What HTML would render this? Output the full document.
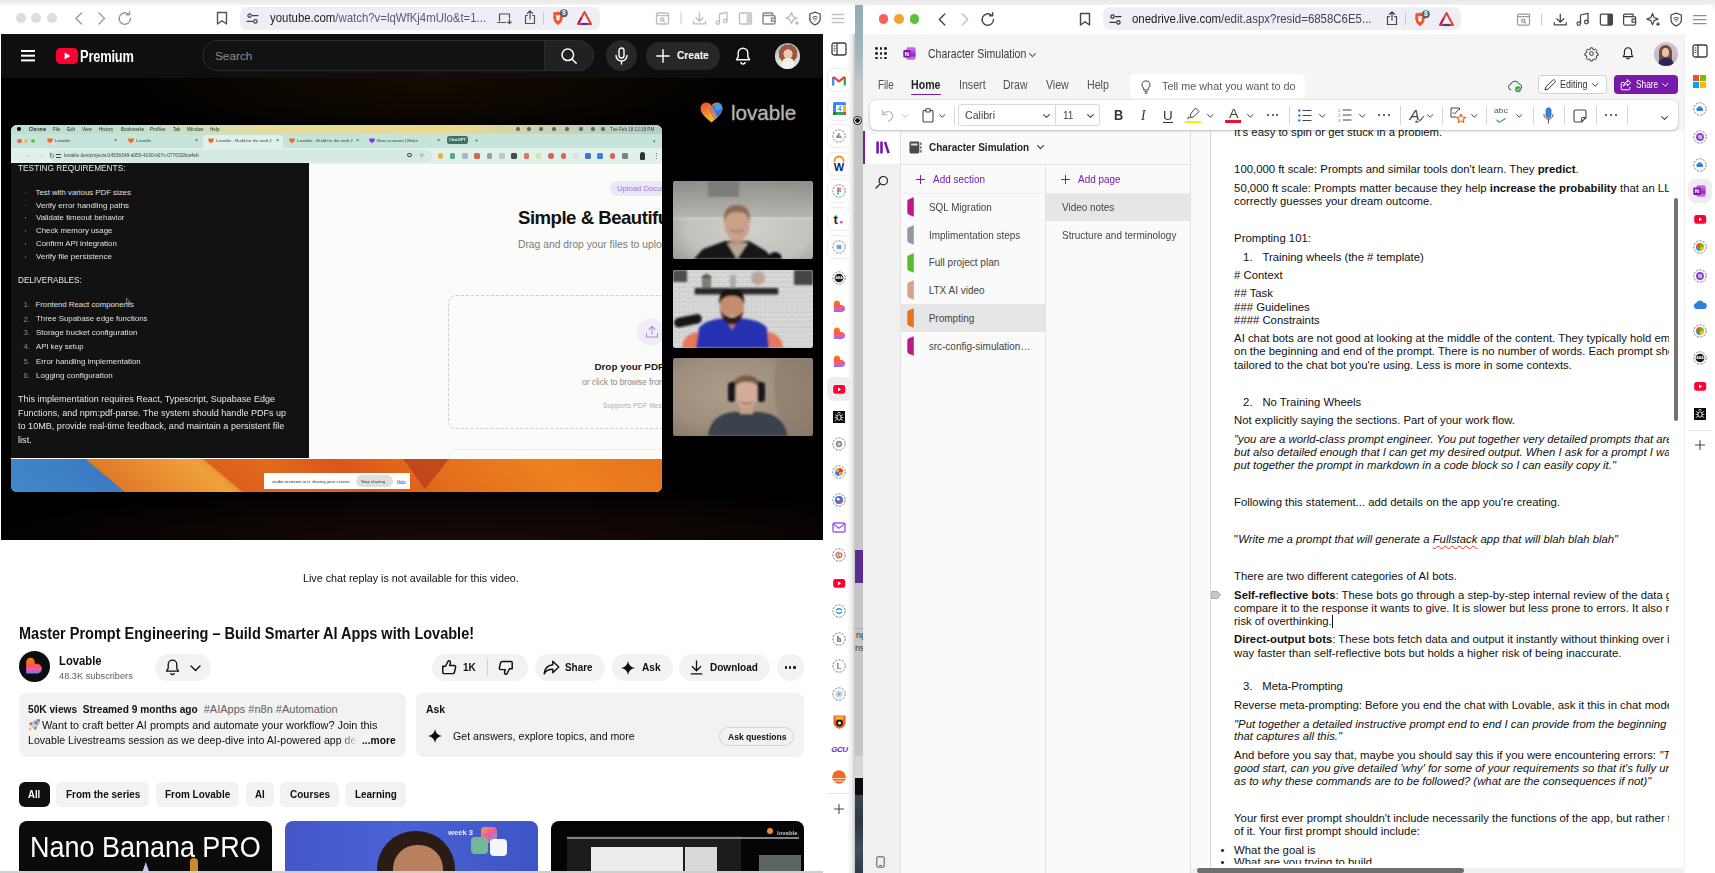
<!DOCTYPE html>
<html lang="en">
<head>
<meta charset="utf-8">
<title>Screenshot</title>
<style>
*{box-sizing:border-box;margin:0;padding:0}
html,body{width:1715px;height:873px;overflow:hidden;background:#c9c9c9;font-family:"Liberation Sans",sans-serif;color:#0f0f0f}
.abs{position:absolute}
#root{position:relative;width:1715px;height:873px;overflow:hidden}
.t{position:absolute;white-space:nowrap;line-height:1}
svg{position:absolute;overflow:visible}
/* ---------- left window ---------- */
#lw{position:absolute;left:0;top:0;width:855px;height:873px;background:#fff;overflow:hidden}
#lw .topstrip{position:absolute;left:0;top:0;width:855px;height:5px;background:linear-gradient(#e9e9e9,#f3f3f3)}
#lbar{position:absolute;left:0;top:5px;width:855px;height:29px;background:#fff}
.tl{position:absolute;width:10px;height:10px;border-radius:50%;top:13px}
.urlbar{position:absolute;top:7px;height:23px;border-radius:7px;background:#eeeef6}
#ythead{position:absolute;left:1px;top:34px;width:822px;height:44px;background:#0f0f0f}
#video{position:absolute;left:1px;top:78px;width:822px;height:462px;background:#000;overflow:hidden}
#lside{position:absolute;left:823px;top:34px;width:32px;height:839px;background:linear-gradient(90deg,#fff 0,#fff 24px,#ededed 29px,#c4c4c4 32px)}
#ytbody{position:absolute;left:1px;top:540px;width:822px;height:333px;background:#fff;overflow:hidden}
.pill{position:absolute;background:#f2f2f2;border-radius:14px;height:28px}
.chip{position:absolute;top:242px;height:25px;border-radius:6px;background:#f2f2f2;font-size:11px;font-weight:bold;line-height:25px;text-align:center;color:#0f0f0f;white-space:nowrap}

/* video */
#ss{position:absolute;left:10.500px;top:125px;width:651.500px;height:367px;border-radius:6px;overflow:hidden;background:#fbfcfa}
#ss .t{color:#e4e4e4}
.vt{position:absolute;white-space:nowrap;line-height:1;font-size:7.600px;color:#e0e0e0}
.cam{position:absolute;left:673px;width:139.500px;border-radius:3px;overflow:hidden}
/* ---------- gap ---------- */
#gap{position:absolute;left:855px;top:0;width:8px;height:873px;background:#c6c6c6}
/* ---------- right window ---------- */
#rw{position:absolute;left:863px;top:0;width:852px;height:873px;background:#f5f5f5;overflow:hidden}
</style>
</head>
<body>
<div id="root">

<!-- ================= LEFT WINDOW (YouTube) ================= -->
<div id="lw">
  <div class="topstrip"></div>
  <div id="lbar"></div>
  <!-- traffic lights (inactive) -->
  <div class="tl" style="left:16px;background:#dddddd"></div>
  <div class="tl" style="left:31px;background:#dddddd"></div>
  <div class="tl" style="left:47px;background:#dddddd"></div>
  <svg style="left:72px;top:11px" width="64" height="15" viewBox="0 0 64 15" fill="none" stroke="#9a9a9a" stroke-width="1.4" stroke-linecap="round" stroke-linejoin="round">
    <path d="M9.5 2 L4 7.5 L9.5 13"/>
    <path d="M27 2 L32.5 7.5 L27 13"/>
    <path d="M58.5 7.5 a5.7 5.7 0 1 1 -2 -4.3 M57.5 0.8 v3 h-3"/>
  </svg>
  <svg style="left:216px;top:11px" width="12" height="15" viewBox="0 0 12 15" fill="none" stroke="#555" stroke-width="1.4" stroke-linejoin="round"><path d="M1.5 1.5 h9 v11.5 l-4.5 -3.2 l-4.5 3.2 z"/></svg>
  <div class="urlbar" style="left:240px;width:360px"></div>
  <svg style="left:246px;top:12px" width="13" height="13" viewBox="0 0 13 13" fill="none" stroke="#444" stroke-width="1.2" stroke-linecap="round"><circle cx="3.6" cy="3.6" r="1.7"/><path d="M6.6 3.6 H12"/><circle cx="9.4" cy="9.4" r="1.7"/><path d="M1 9.4 H6.4"/></svg>
  <div class="t" style="left:269.500px;top:11.800px;font-size:12.400px;color:#5c5c66;transform:scaleX(.92);transform-origin:0 50%"><span style="color:#1d1d22">youtube.com</span>/watch?v=lqWfKj4mUlo&amp;t=1...</div>
  <svg style="left:497px;top:12px" width="15" height="13" viewBox="0 0 15 13" fill="none" stroke="#555" stroke-width="1.2" stroke-linecap="round" stroke-linejoin="round"><path d="M2.5 9 V2 h10 v4"/><path d="M0.8 10.5 h8"/><path d="M12.5 7.5 v4 M10.8 10 l1.7 1.7 l1.7 -1.7"/></svg>
  <svg style="left:524px;top:10px" width="12" height="15" viewBox="0 0 12 15" fill="none" stroke="#555" stroke-width="1.2" stroke-linecap="round" stroke-linejoin="round"><path d="M6 1 V9 M3.3 3.4 L6 0.8 L8.7 3.4"/><path d="M3.5 5.5 H1.5 V13.5 H10.5 V5.5 H8.5"/></svg>
  <div class="abs" style="left:543px;top:12px;width:1px;height:13px;background:#c9c9d2"></div>
  <svg style="left:550px;top:9px" width="20" height="18" viewBox="0 0 20 18"><path d="M3 4.5 L4.5 2.8 L6 3.4 L8 2.2 L10 3.4 L11.5 2.8 L13 4.5 L12.4 6 L13 8.2 L11.5 13 L8 16.2 L4.5 13 L3 8.2 L3.6 6 Z" fill="#f1562b"/><path d="M5.6 6.3 h4.8 l-1 2.4 l0.6 1.6 l-2 1.6 l-2 -1.6 l0.6 -1.6 z" fill="#fff" opacity=".9"/><circle cx="13.8" cy="4.2" r="4" fill="#5e6067"/><text x="13.8" y="6.4" font-size="6.5" font-family="Liberation Sans,sans-serif" fill="#fff" text-anchor="middle" font-weight="bold">9</text></svg>
  <svg style="left:577px;top:11px" width="15" height="14" viewBox="0 0 15 14"><path d="M7.5 1 L14 13 H1 Z" fill="none" stroke="#e4402f" stroke-width="2" stroke-linejoin="round"/><path d="M7.5 1 L1 13 H7.5" fill="none" stroke="#9e1f63" stroke-width="2" stroke-linejoin="round" opacity=".0"/><path d="M4.2 13 H10.8" stroke="#662d91" stroke-width="2.2"/><path d="M1.4 12.6 L4.6 6.6" stroke="#9e1f63" stroke-width="2"/><path d="M7.5 6 L9.8 10.5 H5.2 Z" fill="#fff"/></svg>
  <!-- right icon group (dimmed) -->
  <svg style="left:655px;top:11px" width="190" height="15" viewBox="0 0 190 15" fill="none" stroke="#bdbdbd" stroke-width="1.3" stroke-linecap="round" stroke-linejoin="round">
    <rect x="1.5" y="2" width="12" height="11" rx="1.2"/><path d="M1.5 4.6 h12"/><circle cx="7.2" cy="8.6" r="1.6"/><path d="M8.4 9.8 l1.3 1.3"/>
    <path d="M26 2 v11" stroke="#d4d4d4"/>
    <path d="M44.500 2 v8 M41 6.800 l3.500 3.400 l3.500 -3.400 M38.500 10.500 v2.300 h12 v-2.300"/>
    <path d="M64.500 11.500 v-8.500 l7.500 -1.600 v8.500"/><circle cx="62.800" cy="11.600" r="1.800"/><circle cx="70.300" cy="10" r="1.800"/>
    <rect x="84.500" y="2" width="12" height="11" rx="1.200"/><path d="M91.500 2 h5 v11 h-5 z" fill="#cfcfcf" stroke="none"/>
    <path d="M108 4.500 v7.300 a1.200 1.200 0 0 0 1.200 1.200 h9.600 a1.200 1.200 0 0 0 1.200 -1.200 v-6.100 a1.200 1.200 0 0 0 -1.200 -1.200 h-10.800 v-1.300 a1.200 1.200 0 0 1 1.200 -1.200 h8.300 v2.500" stroke="#8c8c8c" stroke-width="1.500"/><path d="M120 7 h-3.500 v3.200 h3.500" stroke="#8c8c8c" stroke-width="1.500"/>
    <path d="M136.500 1.500 l1.600 4 l4 1.600 l-4 1.600 l-1.600 4 l-1.600 -4 l-4 -1.600 l4 -1.600 z"/><path d="M142 10.500 v3 M140.500 12 h3"/>
    <path d="M160 1.200 l5.200 1.800 v4.500 c0 3 -2.300 5.200 -5.200 6.300 c-2.900 -1.100 -5.200 -3.300 -5.200 -6.300 v-4.500 z" stroke="#555"/><path d="M157.600 6.200 q2.400 -1.800 4.800 0 M158.500 8 q1.500 -1 3 0" stroke="#555" stroke-width="1"/><circle cx="160" cy="9.800" r=".6" fill="#555" stroke="none"/>
    <path d="M177 3.500 h12 M177 7.500 h12 M177 11.500 h12" stroke="#c4c4c4"/>
  </svg>
  <div id="ythead"></div>
  <!-- yt header contents -->
  <div class="abs" style="left:21px;top:50px;width:14px;height:1.6px;background:#fff;box-shadow:0 4.7px 0 #fff,0 9.4px 0 #fff"></div>
  <div class="abs" style="left:56px;top:48px;width:22px;height:15.5px;border-radius:4.5px;background:#ff0033"></div>
  <svg style="left:64px;top:52px" width="7" height="8" viewBox="0 0 7 8"><path d="M0.6 0.4 L6.4 4 L0.6 7.600 Z" fill="#fff"/></svg>
  <div class="t" style="left:80px;top:48.200px;font-size:17.200px;font-weight:bold;color:#fff;transform:scaleX(.745);transform-origin:0 0;letter-spacing:-.2px">Premium</div>
  <div class="abs" style="left:202px;top:40px;width:392px;height:31px;border-radius:16px;border:1px solid #2c2c2c;background:#121212"></div>
  <div class="abs" style="left:544px;top:40px;width:50px;height:31px;border-radius:0 16px 16px 0;border:1px solid #2c2c2c;background:#212121"></div>
  <div class="t" style="left:215px;top:50.600px;font-size:11.800px;color:#8d8d8d">Search</div>
  <svg style="left:560px;top:47px" width="18" height="18" viewBox="0 0 18 18" fill="none" stroke="#fff" stroke-width="1.5" stroke-linecap="round"><circle cx="7.800" cy="7.800" r="5.800"/><path d="M12.200 12.200 L16.200 16.200"/></svg>
  <div class="abs" style="left:606px;top:40px;width:31px;height:31px;border-radius:50%;background:#272727"></div>
  <svg style="left:614px;top:47px" width="15" height="18" viewBox="0 0 15 18" fill="none" stroke="#fff" stroke-width="1.400" stroke-linecap="round"><rect x="5" y="1" width="5" height="10" rx="2.500"/><path d="M2 8.500 a5.500 5.500 0 0 0 11 0 M7.500 14 v3"/></svg>
  <div class="abs" style="left:646px;top:42px;width:74px;height:28px;border-radius:14px;background:#272727"></div>
  <svg style="left:656px;top:49px" width="14" height="14" viewBox="0 0 14 14" stroke="#fff" stroke-width="1.400" stroke-linecap="round"><path d="M7 0.800 V13.200 M0.800 7 H13.200"/></svg>
  <div class="t" style="left:677px;top:50.800px;font-size:10.200px;font-weight:bold;color:#fff">Create</div>
  <svg style="left:735px;top:47px" width="16" height="18" viewBox="0 0 16 18" fill="none" stroke="#fff" stroke-width="1.400" stroke-linejoin="round"><path d="M8 1.200 a4.800 4.800 0 0 0 -4.800 4.800 v3.600 l-1.700 3.200 h13 l-1.700 -3.200 v-3.600 a4.800 4.800 0 0 0 -4.800 -4.800 z"/><path d="M6 15 a2 2 0 0 0 4 0"/></svg>
  <div class="abs" style="left:774.500px;top:43px;width:25.500px;height:25.500px;border-radius:50%;overflow:hidden;background:radial-gradient(circle at 52% 42%,#e9c9b4 0 22%,#a0563a 24% 46%,transparent 47%),linear-gradient(#9aa3a8,#d7d9da 60%,#e8e6e3)"><div class="abs" style="left:7px;top:15px;width:12px;height:12px;border-radius:5px 5px 0 0;background:#f3efec"></div></div>
  <div id="video"><div class="abs" style="left:0;top:0;width:822px;height:462px;background:radial-gradient(ellipse 330px 70px at 430px 0,#160c01 0,rgba(14,7,0,0) 100%),radial-gradient(ellipse 520px 55px at 470px 462px,#190b07 0,rgba(20,8,6,0) 100%)"></div></div>
<div id="ss">
<div class="abs" style="left:0;top:0;width:652px;height:8.500px;background:linear-gradient(90deg,#bcdfd2 0,#c6e0c8 22%,#e6dc98 40%,#ead98f 68%,#c9d3b4 82%,#b5cdc4 100%)"></div>
<div class="abs" style="left:0;top:8.500px;width:652px;height:14.500px;background:#c6e4da"></div>
<div class="abs" style="left:0;top:23px;width:652px;height:15.500px;background:#e0f1eb"></div>
<div class="abs" style="left:38px;top:25px;width:383px;height:11.500px;border-radius:6px;background:#d3e9e2"></div>
<div class="abs" style="left:192px;top:10px;width:80px;height:13px;border-radius:4px 4px 0 0;background:#e0f1eb"></div>
<div class="abs" style="left:6.500px;top:2px;width:3.600px;height:4.400px;border-radius:45%;background:#111"></div>
<div class="t" style="left:18.0px;top:-0.2px;font-size:9.2px;line-height:1;color:#22302c;font-weight:bold;transform:scale(.5);transform-origin:0 50%;">Chrome</div>
<div class="t" style="left:42.0px;top:-0.2px;font-size:9.2px;line-height:1;color:#22302c;font-weight:normal;transform:scale(.5);transform-origin:0 50%;">File</div>
<div class="t" style="left:56.0px;top:-0.2px;font-size:9.2px;line-height:1;color:#22302c;font-weight:normal;transform:scale(.5);transform-origin:0 50%;">Edit</div>
<div class="t" style="left:71.0px;top:-0.2px;font-size:9.2px;line-height:1;color:#22302c;font-weight:normal;transform:scale(.5);transform-origin:0 50%;">View</div>
<div class="t" style="left:88.0px;top:-0.2px;font-size:9.2px;line-height:1;color:#22302c;font-weight:normal;transform:scale(.5);transform-origin:0 50%;">History</div>
<div class="t" style="left:110.0px;top:-0.2px;font-size:9.2px;line-height:1;color:#22302c;font-weight:normal;transform:scale(.5);transform-origin:0 50%;">Bookmarks</div>
<div class="t" style="left:139.5px;top:-0.2px;font-size:9.2px;line-height:1;color:#22302c;font-weight:normal;transform:scale(.5);transform-origin:0 50%;">Profiles</div>
<div class="t" style="left:162.0px;top:-0.2px;font-size:9.2px;line-height:1;color:#22302c;font-weight:normal;transform:scale(.5);transform-origin:0 50%;">Tab</div>
<div class="t" style="left:176.5px;top:-0.2px;font-size:9.2px;line-height:1;color:#22302c;font-weight:normal;transform:scale(.5);transform-origin:0 50%;">Window</div>
<div class="t" style="left:199.5px;top:-0.2px;font-size:9.2px;line-height:1;color:#22302c;font-weight:normal;transform:scale(.5);transform-origin:0 50%;">Help</div>
<div class="t" style="left:599.5px;top:-0.2px;font-size:9.2px;line-height:1;color:#33433e;font-weight:normal;transform:scale(.5);transform-origin:0 50%;">Tue Feb 18 12:18 PM</div>
<div class="abs" style="left:505px;top:2.300px;width:4.400px;height:3.800px;border-radius:1.500px;background:#26332f;opacity:.62"></div>
<div class="abs" style="left:516px;top:2.300px;width:4.400px;height:3.800px;border-radius:1.500px;background:#26332f;opacity:.62"></div>
<div class="abs" style="left:528px;top:2.300px;width:4.400px;height:3.800px;border-radius:1.500px;background:#26332f;opacity:.62"></div>
<div class="abs" style="left:541px;top:2.300px;width:4.400px;height:3.800px;border-radius:1.500px;background:#26332f;opacity:.62"></div>
<div class="abs" style="left:554px;top:2.300px;width:4.400px;height:3.800px;border-radius:1.500px;background:#26332f;opacity:.62"></div>
<div class="abs" style="left:568px;top:2.300px;width:4.400px;height:3.800px;border-radius:1.500px;background:#26332f;opacity:.62"></div>
<div class="abs" style="left:580px;top:2.300px;width:4.400px;height:3.800px;border-radius:1.500px;background:#26332f;opacity:.62"></div>
<div class="abs" style="left:590px;top:2.300px;width:4.400px;height:3.800px;border-radius:1.500px;background:#26332f;opacity:.62"></div>
<div class="abs" style="left:6.9px;top:13.700px;width:4.200px;height:4.200px;border-radius:50%;background:#ee5f57"></div>
<div class="abs" style="left:13.700000000000001px;top:13.700px;width:4.200px;height:4.200px;border-radius:50%;background:#f5bd4f"></div>
<div class="abs" style="left:20.4px;top:13.700px;width:4.200px;height:4.200px;border-radius:50%;background:#5ec454"></div>
<svg style="left:36.0px;top:12.800px" width="6" height="5.500" viewBox="0 0 23 21"><path d="M11.500 20.500 C4 14.500 0.500 10.500 0.500 6.300 C0.500 3 3 0.600 6 0.600 C8.300 0.600 10.300 1.800 11.500 3.800 C12.700 1.800 14.700 0.600 17 0.600 C20 0.600 22.500 3 22.500 6.300 C22.500 10.500 19 14.500 11.500 20.500 Z" fill="#ee6a2c"/></svg>
<div class="t" style="left:44.5px;top:11.2px;font-size:8.8px;line-height:1;color:#33413d;font-weight:normal;transform:scale(.5);transform-origin:0 50%;max-width:112px;overflow:hidden;">Lovable</div>
<div class="t" style="left:103.0px;top:10.2px;font-size:10.8px;line-height:1;color:#33413d;font-weight:normal;transform:scale(.5);transform-origin:0 50%;">×</div>
<svg style="left:117.0px;top:12.800px" width="6" height="5.500" viewBox="0 0 23 21"><path d="M11.500 20.500 C4 14.500 0.500 10.500 0.500 6.300 C0.500 3 3 0.600 6 0.600 C8.300 0.600 10.300 1.800 11.500 3.800 C12.700 1.800 14.700 0.600 17 0.600 C20 0.600 22.500 3 22.500 6.300 C22.500 10.500 19 14.500 11.500 20.500 Z" fill="#ee6a2c"/></svg>
<div class="t" style="left:125.5px;top:11.2px;font-size:8.8px;line-height:1;color:#33413d;font-weight:normal;transform:scale(.5);transform-origin:0 50%;max-width:112px;overflow:hidden;">Lovable</div>
<div class="t" style="left:184.0px;top:10.2px;font-size:10.8px;line-height:1;color:#33413d;font-weight:normal;transform:scale(.5);transform-origin:0 50%;">×</div>
<svg style="left:197.0px;top:12.800px" width="6" height="5.500" viewBox="0 0 23 21"><path d="M11.500 20.500 C4 14.500 0.500 10.500 0.500 6.300 C0.500 3 3 0.600 6 0.600 C8.300 0.600 10.300 1.800 11.500 3.800 C12.700 1.800 14.700 0.600 17 0.600 C20 0.600 22.500 3 22.500 6.300 C22.500 10.500 19 14.500 11.500 20.500 Z" fill="#ee6a2c"/></svg>
<div class="t" style="left:205.5px;top:11.2px;font-size:8.8px;line-height:1;color:#33413d;font-weight:normal;transform:scale(.5);transform-origin:0 50%;max-width:112px;overflow:hidden;">Lovable - Build for the web 2</div>
<div class="t" style="left:265.0px;top:10.2px;font-size:10.8px;line-height:1;color:#33413d;font-weight:normal;transform:scale(.5);transform-origin:0 50%;">×</div>
<svg style="left:278.0px;top:12.800px" width="6" height="5.500" viewBox="0 0 23 21"><path d="M11.500 20.500 C4 14.500 0.500 10.500 0.500 6.300 C0.500 3 3 0.600 6 0.600 C8.300 0.600 10.300 1.800 11.500 3.800 C12.700 1.800 14.700 0.600 17 0.600 C20 0.600 22.500 3 22.500 6.300 C22.500 10.500 19 14.500 11.500 20.500 Z" fill="#ee6a2c"/></svg>
<div class="t" style="left:286.5px;top:11.2px;font-size:8.8px;line-height:1;color:#33413d;font-weight:normal;transform:scale(.5);transform-origin:0 50%;max-width:112px;overflow:hidden;">Lovable - Build for the web 2</div>
<div class="t" style="left:345.0px;top:10.2px;font-size:10.8px;line-height:1;color:#33413d;font-weight:normal;transform:scale(.5);transform-origin:0 50%;">×</div>
<svg style="left:358.0px;top:12.800px" width="6" height="5.500" viewBox="0 0 23 21"><path d="M11.500 20.500 C4 14.500 0.500 10.500 0.500 6.300 C0.500 3 3 0.600 6 0.600 C8.300 0.600 10.300 1.800 11.500 3.800 C12.700 1.800 14.700 0.600 17 0.600 C20 0.600 22.500 3 22.500 6.300 C22.500 10.500 19 14.500 11.500 20.500 Z" fill="#7a3fe0"/></svg>
<div class="t" style="left:366.5px;top:11.2px;font-size:8.8px;line-height:1;color:#33413d;font-weight:normal;transform:scale(.5);transform-origin:0 50%;max-width:112px;overflow:hidden;">New scenario | Make</div>
<div class="t" style="left:426.0px;top:10.2px;font-size:10.8px;line-height:1;color:#33413d;font-weight:normal;transform:scale(.5);transform-origin:0 50%;">×</div>
<div class="abs" style="left:436.500px;top:10.500px;width:21px;height:8.500px;border-radius:2.500px;background:#3d7265"></div>
<div class="t" style="left:438.8px;top:11.3px;font-size:7.8px;line-height:1;color:#e8f5f0;font-weight:bold;transform:scale(.5);transform-origin:0 50%;">ChatGPT</div>
<div class="t" style="left:464.0px;top:9.2px;font-size:12px;line-height:1;color:#33413d;font-weight:normal;transform:scale(.5);transform-origin:0 50%;">+</div>
<div class="t" style="left:642.0px;top:10.6px;font-size:10px;line-height:1;color:#2e8a6a;font-weight:normal;transform:scale(.5);transform-origin:0 50%;">▾</div>
<div class="t" style="left:15.0px;top:24.4px;font-size:12px;line-height:1;color:#8a9a95;font-weight:normal;transform:scale(.5);transform-origin:0 50%;">←</div>
<div class="t" style="left:27.0px;top:24.4px;font-size:12px;line-height:1;color:#8a9a95;font-weight:normal;transform:scale(.5);transform-origin:0 50%;">→</div>
<div class="t" style="left:38.5px;top:23.4px;font-size:14px;line-height:1;color:#44524e;font-weight:normal;transform:scale(.5);transform-origin:0 50%;">↻</div>
<div class="abs" style="left:45.500px;top:28.500px;width:5px;height:4px;border-top:.8px solid #445;border-bottom:.8px solid #445"></div>
<div class="t" style="left:53.0px;top:25.8px;font-size:9.6px;line-height:1;color:#3a4844;font-weight:normal;transform:scale(.5);transform-origin:0 50%;">lovable.dev/projects/1453b348-a950-4190-b07c-0776328ca4eb</div>
<div class="abs" style="left:427.0px;top:28px;width:5.600px;height:5.600px;border-radius:50%;background:#e8a020;opacity:.8"></div>
<div class="abs" style="left:439.3px;top:28px;width:5.600px;height:5.600px;border-radius:1.500px;background:#2e9e6a;opacity:.8"></div>
<div class="abs" style="left:451.6px;top:28px;width:5.600px;height:5.600px;border-radius:1.500px;background:#9ab;opacity:.8"></div>
<div class="abs" style="left:463.9px;top:28px;width:5.600px;height:5.600px;border-radius:1.500px;background:#c0502a;opacity:.8"></div>
<div class="abs" style="left:476.2px;top:28px;width:5.600px;height:5.600px;border-radius:1.500px;background:#889;opacity:.8"></div>
<div class="abs" style="left:488.5px;top:28px;width:5.600px;height:5.600px;border-radius:1.500px;background:#bbb;opacity:.8"></div>
<div class="abs" style="left:500.8px;top:28px;width:5.600px;height:5.600px;border-radius:1.500px;background:#222;opacity:.8"></div>
<div class="abs" style="left:513.1px;top:28px;width:5.600px;height:5.600px;border-radius:1.500px;background:#e05050;opacity:.8"></div>
<div class="abs" style="left:525.4px;top:28px;width:5.600px;height:5.600px;border-radius:1.500px;background:#cfe0a0;opacity:.8"></div>
<div class="abs" style="left:537.7px;top:28px;width:5.600px;height:5.600px;border-radius:50%;background:#d8402a;opacity:.8"></div>
<div class="abs" style="left:550.0px;top:28px;width:5.600px;height:5.600px;border-radius:50%;background:#e0401a;opacity:.8"></div>
<div class="abs" style="left:562.3px;top:28px;width:5.600px;height:5.600px;border-radius:1.500px;background:#ddd;opacity:.8"></div>
<div class="abs" style="left:574.6px;top:28px;width:5.600px;height:5.600px;border-radius:1.500px;background:#3050c0;opacity:.8"></div>
<div class="abs" style="left:586.9px;top:28px;width:5.600px;height:5.600px;border-radius:1.500px;background:#2060d0;opacity:.8"></div>
<div class="abs" style="left:599.2px;top:28px;width:5.600px;height:5.600px;border-radius:50%;background:#d8402a;opacity:.8"></div>
<div class="abs" style="left:611.5px;top:28px;width:5.600px;height:5.600px;border-radius:1.500px;background:#666;opacity:.8"></div>
<div class="abs" style="left:629px;top:27px;width:5px;height:7.500px;border-radius:2.500px 2.500px 1px 1px;background:#333"></div>
<div class="t" style="left:642.0px;top:23.9px;font-size:13.0px;line-height:1;color:#555;font-weight:normal;transform:scale(.5);transform-origin:0 50%;">⋮</div>
<div class="t" style="left:408.0px;top:24.4px;font-size:12px;line-height:1;color:#445;font-weight:normal;transform:scale(.5);transform-origin:0 50%;">☆</div>
<div class="abs" style="left:396.500px;top:27.500px;width:4.500px;height:4.500px;border-radius:50%;border:1px solid #445"></div>
<div class="abs" style="left:0;top:38.300px;width:298px;height:295.200px;background:#121212"></div>
<div class="t" style="left:7.9px;top:39.4px;font-size:8.4px;color:#e8e8e8;transform:scaleX(0.9915);transform-origin:0 50%;">TESTING REQUIREMENTS:</div>
<div class="t" style="left:25.0px;top:63.7px;font-size:7.8px;color:#e0e0e0;">Test with various PDF sizes</div>
<div class="abs" style="left:14.1px;top:66.6px;width:1.800px;height:1.800px;border-radius:50%;background:#6e6e6e"></div>
<div class="t" style="left:25.0px;top:76.6px;font-size:7.8px;color:#e0e0e0;transform:scaleX(1.0229);transform-origin:0 50%;">Verify error handling paths</div>
<div class="abs" style="left:14.1px;top:79.5px;width:1.800px;height:1.800px;border-radius:50%;background:#6e6e6e"></div>
<div class="t" style="left:25.0px;top:89.4px;font-size:7.8px;color:#e0e0e0;transform:scaleX(1.0125);transform-origin:0 50%;">Validate timeout behavior</div>
<div class="abs" style="left:14.1px;top:92.3px;width:1.800px;height:1.800px;border-radius:50%;background:#6e6e6e"></div>
<div class="t" style="left:25.0px;top:102.3px;font-size:7.8px;color:#e0e0e0;transform:scaleX(1.0075);transform-origin:0 50%;">Check memory usage</div>
<div class="abs" style="left:14.1px;top:105.2px;width:1.800px;height:1.800px;border-radius:50%;background:#6e6e6e"></div>
<div class="t" style="left:25.0px;top:115.1px;font-size:7.8px;color:#e0e0e0;transform:scaleX(1.0074);transform-origin:0 50%;">Confirm API integration</div>
<div class="abs" style="left:14.1px;top:118.0px;width:1.800px;height:1.800px;border-radius:50%;background:#6e6e6e"></div>
<div class="t" style="left:25.0px;top:128.0px;font-size:7.8px;color:#e0e0e0;transform:scaleX(1.0303);transform-origin:0 50%;">Verify file persistence</div>
<div class="abs" style="left:14.1px;top:130.9px;width:1.800px;height:1.800px;border-radius:50%;background:#6e6e6e"></div>
<div class="t" style="left:7.9px;top:151.1px;font-size:8.4px;color:#e8e8e8;transform:scaleX(0.9790);transform-origin:0 50%;">DELIVERABLES:</div>
<div class="t" style="left:25.0px;top:175.9px;font-size:7.8px;color:#e0e0e0;">Frontend React components</div>
<div class="t" style="left:13.1px;top:176.0px;font-size:7.6px;color:#8c8c8c;">1.</div>
<div class="t" style="left:25.0px;top:190.4px;font-size:7.8px;color:#e0e0e0;transform:scaleX(1.0087);transform-origin:0 50%;">Three Supabase edge functions</div>
<div class="t" style="left:13.1px;top:190.5px;font-size:7.6px;color:#8c8c8c;">2.</div>
<div class="t" style="left:25.0px;top:204.2px;font-size:7.8px;color:#e0e0e0;transform:scaleX(1.0216);transform-origin:0 50%;">Storage bucket configuration</div>
<div class="t" style="left:13.1px;top:204.3px;font-size:7.6px;color:#8c8c8c;">3.</div>
<div class="t" style="left:25.0px;top:218.2px;font-size:7.8px;color:#e0e0e0;transform:scaleX(0.9874);transform-origin:0 50%;">API key setup</div>
<div class="t" style="left:13.1px;top:218.3px;font-size:7.6px;color:#8c8c8c;">4.</div>
<div class="t" style="left:25.0px;top:232.8px;font-size:7.8px;color:#e0e0e0;transform:scaleX(1.0066);transform-origin:0 50%;">Error handling implementation</div>
<div class="t" style="left:13.1px;top:232.9px;font-size:7.6px;color:#8c8c8c;">5.</div>
<div class="t" style="left:25.0px;top:246.8px;font-size:7.8px;color:#e0e0e0;transform:scaleX(1.0287);transform-origin:0 50%;">Logging configuration</div>
<div class="t" style="left:13.1px;top:246.9px;font-size:7.6px;color:#8c8c8c;">6.</div>
<div class="t" style="left:7.4px;top:270.1px;font-size:8.6px;color:#e6e6e6;transform:scaleX(1.0492);transform-origin:0 50%;">This implementation requires React, Typescript, Supabase Edge</div>
<div class="t" style="left:7.4px;top:283.8px;font-size:8.6px;color:#e6e6e6;transform:scaleX(1.0518);transform-origin:0 50%;">Functions, and npm:pdf-parse. The system should handle PDFs up</div>
<div class="t" style="left:7.4px;top:297.0px;font-size:8.6px;color:#e6e6e6;transform:scaleX(1.0562);transform-origin:0 50%;">to 10MB, provide real-time feedback, and maintain a persistent file</div>
<div class="t" style="left:7.4px;top:310.5px;font-size:8.6px;color:#e6e6e6;transform:scaleX(1.0628);transform-origin:0 50%;">list.</div>
<svg style="left:115px;top:172.500px" width="5" height="7" viewBox="0 0 5 7"><path d="M0.500 0.300 L0.500 5.800 L1.900 4.600 L2.900 6.700 L3.700 6.300 L2.700 4.300 L4.500 4.200 Z" fill="#111" stroke="#ddd" stroke-width=".5"/></svg>
<div class="abs" style="left:599.900px;top:56.200px;width:60px;height:14.800px;border-radius:7.400px;background:#ece7f4"></div>
<div class="t" style="left:606.5px;top:60.0px;font-size:7.7px;color:#a577d6;">Upload Documents</div>
<div class="t" style="left:507.5px;top:83.5px;font-size:18.6px;color:#111;font-weight:bold;letter-spacing:-.5px;">Simple &amp; Beautiful</div>
<div class="t" style="left:507.5px;top:115.0px;font-size:10.3px;color:#7a7a7a;">Drag and drop your files to upload</div>
<div class="abs" style="left:437.400px;top:169.500px;width:260px;height:134.200px;border-radius:8px;border:1px dashed #cdcdcd"></div>
<div class="abs" style="left:437.400px;top:323.500px;width:260px;height:40px;border-radius:8px;border:1px solid #ececec"></div>
<div class="abs" style="left:626.800px;top:192.600px;width:28px;height:28px;border-radius:50%;background:#f1edf7"></div>
<svg style="left:634px;top:199.500px" width="14" height="14" viewBox="0 0 14 14" fill="none" stroke="#a98ad8" stroke-width="1.100" stroke-linecap="round" stroke-linejoin="round"><path d="M7 9 V1.500 M4 4.300 L7 1.300 L10 4.300 M1.500 8.500 v3.500 h11 v-3.500"/></svg>
<div class="t" style="left:583.9px;top:236.7px;font-size:9.9px;color:#1c1c1c;font-weight:bold;">Drop your PDF here</div>
<div class="t" style="left:571.5px;top:253.4px;font-size:8.4px;color:#8a8a8a;">or click to browse from</div>
<div class="t" style="left:592.2px;top:278.0px;font-size:7.1px;color:#b0b0b0;">Supports PDF files</div>
<div class="abs" style="left:0;top:333.500px;width:652px;height:34px;background:linear-gradient(40deg,#4288cb 0,#3a7cc2 16.500%,#e07a2a 16.700%,#f0a23a 32%,#eb952f 33.400%,#dc5f1c 33.800%,#e36a1d 42%,#d9561b 52%,#e46c1c 64%,#ee821f 82%,#e8741c 100%)"></div>
<div class="abs" style="left:392px;top:333.500px;width:0;height:0;border-left:22px solid transparent;border-right:24px solid transparent;border-top:30px solid #b8401a;opacity:.8"></div>
<div class="abs" style="left:253px;top:347.700px;width:146.300px;height:16.500px;background:#fff"></div>
<div class="t" style="left:261.5px;top:351.9px;font-size:8.6px;line-height:1;color:#333;font-weight:normal;transform:scale(.5);transform-origin:0 50%;">studio.restream.io is sharing your screen.</div>
<div class="abs" style="left:345.500px;top:350.300px;width:36.600px;height:11.500px;border-radius:6px;background:#dedede"></div>
<div class="t" style="left:350.7px;top:351.9px;font-size:8.6px;line-height:1;color:#333;font-weight:normal;transform:scale(.5);transform-origin:0 50%;">Stop sharing</div>
<div class="t" style="left:386.2px;top:351.9px;font-size:8.6px;line-height:1;color:#3355cc;font-weight:normal;transform:scale(.5);transform-origin:0 50%;text-decoration:underline;">Hide</div>
</div>

  <!-- lovable logo -->
  <svg style="left:700px;top:102px" width="23" height="21" viewBox="0 0 23 21"><defs><linearGradient id="hg" x1="0" y1="0" x2=".55" y2="1"><stop offset="0" stop-color="#e9432b"/><stop offset=".4" stop-color="#f3782c"/><stop offset=".7" stop-color="#f6a52f"/><stop offset="1" stop-color="#f5bd4a"/></linearGradient><clipPath id="hc"><path d="M11.500 20.500 C4 14.500 0.500 10.500 0.500 6.300 C0.500 3 3 0.600 6 0.600 C8.300 0.600 10.300 1.800 11.500 3.800 C12.700 1.800 14.700 0.600 17 0.600 C20 0.600 22.500 3 22.500 6.300 C22.500 10.500 19 14.500 11.500 20.500 Z"/></clipPath></defs><g clip-path="url(#hc)"><rect width="23" height="21" fill="url(#hg)"/><path d="M12 4 L23 0 L23 12 L17 15 Z" fill="#3a74d2"/><path d="M11.500 4 L17 15 L14 17.500 L9 8 Z" fill="#8a6fb0" opacity=".55"/><circle cx="18" cy="5" r="3.400" fill="#4a9be6"/></g></svg>
  <div class="t" style="left:731px;top:103.300px;font-size:20.600px;color:#b4b4b4;-webkit-text-stroke:.35px #b4b4b4">lovable</div>
  <!-- webcams -->
  <div class="cam" style="top:181px;height:78px;background:#bdbbb5">
  <svg width="139.500" height="78" viewBox="0 0 139.500 78" style="left:0;top:0"><defs><filter id="b1" x="-10%" y="-10%" width="120%" height="120%"><feGaussianBlur stdDeviation="1.100"/></filter><radialGradient id="v1" cx=".55" cy=".6" r=".75"><stop offset="0" stop-color="#d2d0ca"/><stop offset=".6" stop-color="#c3c1bb"/><stop offset="1" stop-color="#8f8d88"/></radialGradient><linearGradient id="c1" x1="0" y1="0" x2="0" y2="1"><stop offset="0" stop-color="#8e8c88"/><stop offset="1" stop-color="#b4b2ac"/></linearGradient></defs>
  <rect width="139.500" height="78" fill="url(#v1)"/><rect width="139.500" height="36" fill="url(#c1)" opacity=".9"/>
  <g filter="url(#b1)"><rect x="35" y="0" width="31" height="16" fill="#7d7b78"/><path d="M0 38 H139.500" stroke="#d8d6d0" stroke-width="2" opacity=".6"/>
  <path d="M21 78 L30 68 L52 60 L76 60 L93 70 L100 78 Z" fill="#141416"/><path d="M95 78 a7 7 0 0 1 14 0 Z" fill="#101012"/>
  <path d="M54 62 L64 78 L75 62 Z" fill="#b5a794"/><rect x="58" y="52" width="12" height="12" fill="#b98f78"/>
  <ellipse cx="64" cy="44" rx="12.500" ry="16" fill="#c9a08a"/><path d="M51 42 C50 28 56 24 64 24 C73 24 78 29 77 42 C75 34 72 31 64 31 C57 31 53 34 51 42 Z" fill="#8b6c52"/>
  <path d="M58 49 q6 4 12 0" stroke="#8a5a4a" stroke-width="1.200" fill="none"/></g></svg></div>
  <div class="cam" style="top:269.500px;height:78px;background:#d4d4d4">
  <svg width="139.500" height="78" viewBox="0 0 139.500 78" style="left:0;top:0"><defs><filter id="b2" x="-10%" y="-10%" width="120%" height="120%"><feGaussianBlur stdDeviation="1"/></filter><pattern id="br" width="9" height="5" patternUnits="userSpaceOnUse"><rect width="9" height="5" fill="#d9d9d9"/><path d="M0 0 H9 M0 2.500 H9 M2 0 V2.500 M6.500 2.500 V5" stroke="#c2c2c2" stroke-width=".6"/></pattern></defs>
  <rect width="139.500" height="78" fill="url(#br)"/>
  <g filter="url(#b2)"><rect x="0" y="0" width="14" height="12" fill="#4e4e4e"/><rect x="121" y="0" width="19" height="15" fill="#454545"/>
  <rect x="21.700" y="18" width="83.500" height="6.500" fill="#2b2b2b"/><rect x="29" y="8" width="9" height="10" fill="#7d7d78"/><path d="M28 8 q5.500 -8 11 0 z" fill="#4c5a44"/><rect x="57" y="5" width="6" height="13" fill="#aaa"/><circle cx="85" cy="8" r="7" fill="#b9a79a"/>
  <path d="M9 78 C10 66 18 61 31 62 L31 78 Z" fill="#e6775b"/><path d="M110 78 C109 66 101 61 90 62 L90 78 Z" fill="#e6775b"/>
  <path d="M23 78 L26 58 C32 50 46 48 59 48 C72 48 88 50 94 58 L96 78 Z" fill="#2530b2"/><path d="M52 48 L59 60 L66 48 Z" fill="#b9805f"/>
  <ellipse cx="58.800" cy="37" rx="12" ry="16.500" fill="#c48e6e"/><path d="M46.500 35 C45 22 52 18.500 59 18.500 C66 18.500 72.500 22 71 35 C69 28 66 26 59 26 C52 26 48.500 28 46.500 35 Z" fill="#17120f"/>
  <path d="M47.500 40 C49 52 55 54.500 59 54.500 C63 54.500 69 52 70.500 40 C68 46 64 46.500 59 46.500 C54 46.500 50 46 47.500 40 Z" fill="#2b1d17"/><path d="M54 45.500 q5 3.500 10 0 q-5 1.500 -10 0" fill="#f4efe9"/>
  <rect x="1" y="46" width="28" height="9.500" rx="4.700" fill="#121212" transform="rotate(-12 15 51)"/></g></svg></div>
  <div class="cam" style="top:358px;height:78px;background:#a09080">
  <svg width="139.500" height="78" viewBox="0 0 139.500 78" style="left:0;top:0"><defs><filter id="b3" x="-10%" y="-10%" width="120%" height="120%"><feGaussianBlur stdDeviation="1.100"/></filter><radialGradient id="v3" cx=".42" cy=".45" r=".8"><stop offset="0" stop-color="#ad9d8b"/><stop offset=".55" stop-color="#9f8f7d"/><stop offset="1" stop-color="#7d6f61"/></radialGradient></defs>
  <rect width="139.500" height="78" fill="url(#v3)"/>
  <g filter="url(#b3)"><path d="M105 0 C98 20 100 50 112 78 H139.500 V0 Z" fill="#8d7e6e" opacity=".7"/>
  <path d="M35 78 C37 62 46 56 60 54 L87 54 C102 56 112 62 114.500 78 Z" fill="#3a434e"/>
  <rect x="67" y="44" width="13" height="12" fill="#c49f8b"/>
  <path d="M57 36 C55 16 92 16 90 36" stroke="#1b1b1d" stroke-width="3" fill="none"/>
  <ellipse cx="73.400" cy="34" rx="12" ry="15.500" fill="#d3ad9a"/><path d="M61 32 C60 20 66 17.500 73.500 17.500 C81 17.500 87 20 86 32 C84 25 80 24 73.500 24 C67 24 63 25 61 32 Z" fill="#7a5c44"/>
  <rect x="55" y="24" width="7.500" height="20" rx="3.500" fill="#19191b"/><rect x="84.500" y="24" width="7.500" height="20" rx="3.500" fill="#19191b"/>
  <path d="M66 42 C68 49 79 49 81 42 C78 45 69 45 66 42 Z" fill="#a07862" opacity=".8"/></g></svg></div>
  <div id="ytbody"></div>
<div class="t" style="left:303.2px;top:573.0px;font-size:11px;color:#0f0f0f;transform:scaleX(0.9750);transform-origin:0 50%;">Live chat replay is not available for this video.</div>
<div class="t" style="left:18.9px;top:625.9px;font-size:15.8px;color:#0f0f0f;font-weight:bold;transform:scaleX(0.9181);transform-origin:0 50%;">Master Prompt Engineering – Build Smarter AI Apps with Lovable!</div>
<div class="abs" style="left:18.500px;top:650.500px;width:31px;height:31px;border-radius:50%;background:#0d0d0f"></div>
<svg style="left:25px;top:657px" width="18" height="18" viewBox="0 0 18 18"><defs><linearGradient id="lv" x1="0" y1="0" x2="0" y2="1"><stop offset="0" stop-color="#fe7b02"/><stop offset=".45" stop-color="#fe5a3c"/><stop offset=".7" stop-color="#f857a6"/><stop offset="1" stop-color="#6f7cff"/></linearGradient></defs><path d="M5.400 0.800 C8 0.800 9.800 2.800 9.800 5.300 V6.800 H11.400 C14 6.800 16.800 8.600 16.800 11.300 C16.800 14.800 14.500 16.600 11.400 16.600 H1.200 V5.300 C1.200 2.800 2.900 0.800 5.400 0.800 Z" fill="url(#lv)"/></svg>
<div class="t" style="left:59px;top:654.6px;font-size:12.2px;color:#0f0f0f;font-weight:bold;transform:scaleX(0.9250);transform-origin:0 50%;">Lovable</div>
<div class="t" style="left:59px;top:671.1px;font-size:9.6px;color:#606060;transform:scaleX(0.9611);transform-origin:0 50%;">48.3K subscribers</div>
<div class="pill" style="left:154.800px;top:654px;width:56.400px;height:27px;border-radius:13.500px"></div>
<svg style="left:164.500px;top:658.500px" width="15" height="17" viewBox="0 0 15 17" fill="none" stroke="#0f0f0f" stroke-width="1.300" stroke-linejoin="round"><path d="M7.500 1.200 a4.300 4.300 0 0 0 -4.300 4.300 v3.800 l-1.700 2.900 h12 l-1.700 -2.900 v-3.800 a4.300 4.300 0 0 0 -4.300 -4.300 z"/><path d="M5.800 14 a1.700 1.700 0 0 0 3.400 0"/></svg>
<svg style="left:189.500px;top:664.500px" width="11" height="7" viewBox="0 0 11 7" fill="none" stroke="#0f0f0f" stroke-width="1.400" stroke-linecap="round" stroke-linejoin="round"><path d="M1 1 L5.500 5.500 L10 1"/></svg>
<div class="pill" style="left:432px;top:654px;width:95.500px;height:27px;border-radius:13.500px"></div>
<svg style="left:440.500px;top:659px" width="16" height="16" viewBox="0 0 16 16" fill="none" stroke="#0f0f0f" stroke-width="1.450" stroke-linejoin="round"><path d="M1.800 7.300 H4.500 L7.300 1.700 C8.800 1.400 9.800 2.700 9.400 4 L8.700 6.400 H13 C14.100 6.400 14.900 7.400 14.600 8.500 L13.400 13.200 C13.200 14 12.500 14.600 11.600 14.600 H3 C2.300 14.600 1.800 14.100 1.800 13.400 Z"/></svg>
<div class="t" style="left:463.2px;top:662.3px;font-size:10.8px;color:#0f0f0f;font-weight:bold;transform:scaleX(0.9274);transform-origin:0 50%;">1K</div>
<div class="abs" style="left:487px;top:659px;width:1px;height:17px;background:#d0d0d0;"></div>
<svg style="left:498px;top:659.500px" width="16" height="16" viewBox="0 0 16 16" fill="none" stroke="#0f0f0f" stroke-width="1.450" stroke-linejoin="round"><g transform="rotate(180 8 8)"><path d="M1.800 7.300 H4.500 L7.300 1.700 C8.800 1.400 9.800 2.700 9.400 4 L8.700 6.400 H13 C14.100 6.400 14.900 7.400 14.600 8.500 L13.400 13.200 C13.200 14 12.500 14.600 11.600 14.600 H3 C2.300 14.600 1.800 14.100 1.800 13.400 Z"/></g></svg>
<div class="pill" style="left:534.500px;top:654px;width:70.700px;height:27px;border-radius:13.500px"></div>
<svg style="left:542.500px;top:660px" width="17" height="15" viewBox="0 0 17 15" fill="none" stroke="#0f0f0f" stroke-width="1.400" stroke-linejoin="round"><path d="M9.800 1.200 L15.800 7 L9.800 12.800 V9.300 C5.500 9.300 2.800 10.800 1.200 13.800 C1.700 9 4.300 5.200 9.800 4.700 Z"/></svg>
<div class="t" style="left:565.2px;top:662.3px;font-size:10.8px;color:#0f0f0f;font-weight:bold;transform:scaleX(0.9198);transform-origin:0 50%;">Share</div>
<div class="pill" style="left:611.600px;top:654px;width:61.200px;height:27px;border-radius:13.500px"></div>
<svg style="left:621.400px;top:660.500px" width="14" height="14" viewBox="0 0 14 14"><path d="M7 0 C7.600 4 10 6.400 14 7 C10 7.600 7.600 10 7 14 C6.400 10 4 7.600 0 7 C4 6.400 6.400 4 7 0 Z" fill="#0f0f0f"/></svg>
<div class="t" style="left:642.3px;top:662.3px;font-size:10.8px;color:#0f0f0f;font-weight:bold;transform:scaleX(0.9391);transform-origin:0 50%;">Ask</div>
<div class="pill" style="left:679.400px;top:654px;width:90.700px;height:27px;border-radius:13.500px"></div>
<svg style="left:689.500px;top:660px" width="13" height="15" viewBox="0 0 13 15" fill="none" stroke="#0f0f0f" stroke-width="1.300" stroke-linejoin="round"><path d="M6.500 0.500 V10.500 M2 6.300 L6.500 10.700 L11 6.300 M0.800 13.800 H12.200"/></svg>
<div class="t" style="left:710.1px;top:662.3px;font-size:10.8px;color:#0f0f0f;font-weight:bold;transform:scaleX(0.9286);transform-origin:0 50%;">Download</div>
<div class="pill" style="left:776.800px;top:654px;width:27.200px;height:27px;border-radius:13.500px"></div>
<div class="abs" style="left:784.8px;top:666.300px;width:2.400px;height:2.400px;border-radius:50%;background:#0f0f0f"></div>
<div class="abs" style="left:789.0px;top:666.300px;width:2.400px;height:2.400px;border-radius:50%;background:#0f0f0f"></div>
<div class="abs" style="left:793.2px;top:666.300px;width:2.400px;height:2.400px;border-radius:50%;background:#0f0f0f"></div>
<div class="abs" style="left:18.900px;top:693px;width:387.500px;height:64.300px;border-radius:8px;background:#f2f2f2"></div>
<div class="t" style="left:28.2px;top:704.1px;font-size:11px;color:#0f0f0f;font-weight:bold;transform:scaleX(0.9222);transform-origin:0 50%;">50K views&nbsp; Streamed 9 months ago</div>
<div class="t" style="left:203.7px;top:704.1px;font-size:11px;color:#606060;">#AIApps #n8n #Automation</div>
<svg style="left:28px;top:719px" width="12" height="12" viewBox="0 0 11 11"><path d="M10.600 0.400 C6.800 0.300 3.800 2.300 2.600 5.800 L5.200 8.400 C8.700 7.200 10.700 4.200 10.600 0.400 Z" fill="#c9d3e2" stroke="#8793a8" stroke-width=".5"/><path d="M2.900 5 L0.600 5.200 L2.600 3 L4 3.200 Z M6 8.100 L5.800 10.400 L8 8.400 L7.800 7 Z" fill="#e0352b"/><circle cx="7.400" cy="3.600" r="1.300" fill="#3f8ae0" stroke="#6b7688" stroke-width=".4"/><path d="M0.700 10.300 L1.300 7.600 L3.400 9.700 Z" fill="#f5a623"/><path d="M10.600 0.400 C9.500 0.400 8.700 0.500 8 0.800 L10.200 3 C10.500 2.300 10.600 1.500 10.600 0.400 Z" fill="#e0352b"/></svg>
<div class="t" style="left:41.6px;top:719.7px;font-size:11px;color:#0f0f0f;transform:scaleX(0.9896);transform-origin:0 50%;">Want to craft better AI prompts and automate your workflow? Join this</div>
<div class="t" style="left:28.2px;top:735.1px;font-size:11px;color:#0f0f0f;transform:scaleX(0.9642);transform-origin:0 50%;">Lovable Livestreams session as we deep-dive into AI-powered app de</div>
<div class="abs" style="left:340px;top:733px;width:22px;height:15px;background:linear-gradient(90deg,rgba(242,242,242,0),#f2f2f2 85%)"></div>
<div class="t" style="left:362.2px;top:735.1px;font-size:11px;color:#0f0f0f;font-weight:bold;transform:scaleX(0.9316);transform-origin:0 50%;">...more</div>
<div class="abs" style="left:416px;top:693px;width:388px;height:64.300px;border-radius:8px;background:#f2f2f2"></div>
<div class="t" style="left:425.5px;top:703.9px;font-size:11.2px;color:#0f0f0f;font-weight:bold;transform:scaleX(0.9307);transform-origin:0 50%;">Ask</div>
<svg style="left:427.500px;top:729px" width="14" height="14" viewBox="0 0 14 14"><path d="M7 0 C7.600 4 10 6.400 14 7 C10 7.600 7.600 10 7 14 C6.400 10 4 7.600 0 7 C4 6.400 6.400 4 7 0 Z" fill="#0f0f0f"/></svg>
<div class="t" style="left:453.3px;top:730.7px;font-size:11px;color:#0f0f0f;transform:scaleX(0.9649);transform-origin:0 50%;">Get answers, explore topics, and more</div>
<div class="abs" style="left:718.800px;top:727px;width:75.400px;height:18.500px;border-radius:9.500px;border:1px solid #d3d3d3"></div>
<div class="t" style="left:727.5px;top:731.6px;font-size:9.4px;color:#0f0f0f;font-weight:bold;transform:scaleX(0.9130);transform-origin:0 50%;">Ask questions</div>
<div class="abs" style="left:18.8px;top:782px;width:30.8px;height:24.600px;border-radius:6px;background:#0f0f0f"></div>
<div class="t" style="left:28.1px;top:789.3px;font-size:10.8px;color:#fff;font-weight:bold;transform:scaleX(0.8843);transform-origin:0 50%;">All</div>
<div class="abs" style="left:56.2px;top:782px;width:93.0px;height:24.600px;border-radius:6px;background:#f2f2f2"></div>
<div class="t" style="left:65.5px;top:789.3px;font-size:10.8px;color:#0f0f0f;font-weight:bold;transform:scaleX(0.9253);transform-origin:0 50%;">From the series</div>
<div class="abs" style="left:155.7px;top:782px;width:83.8px;height:24.600px;border-radius:6px;background:#f2f2f2"></div>
<div class="t" style="left:165.0px;top:789.3px;font-size:10.8px;color:#0f0f0f;font-weight:bold;transform:scaleX(0.9210);transform-origin:0 50%;">From Lovable</div>
<div class="abs" style="left:245.7px;top:782px;width:28.3px;height:24.600px;border-radius:6px;background:#f2f2f2"></div>
<div class="t" style="left:255.0px;top:789.3px;font-size:10.8px;color:#0f0f0f;font-weight:bold;transform:scaleX(0.8984);transform-origin:0 50%;">AI</div>
<div class="abs" style="left:280.3px;top:782px;width:58.7px;height:24.600px;border-radius:6px;background:#f2f2f2"></div>
<div class="t" style="left:289.6px;top:789.3px;font-size:10.8px;color:#0f0f0f;font-weight:bold;transform:scaleX(0.9282);transform-origin:0 50%;">Courses</div>
<div class="abs" style="left:345.3px;top:782px;width:60.4px;height:24.600px;border-radius:6px;background:#f2f2f2"></div>
<div class="t" style="left:354.6px;top:789.3px;font-size:10.8px;color:#0f0f0f;font-weight:bold;transform:scaleX(0.9168);transform-origin:0 50%;">Learning</div>
<div class="abs" style="left:18.800px;top:821px;width:253.500px;height:60px;border-radius:8px;background:#0b0b0b;overflow:hidden"><div class="abs" style="left:123px;top:41px;width:8px;height:12px;background:#c9c9ff;clip-path:polygon(50% 0,100% 100%,0 100%)"></div><div class="abs" style="left:171px;top:37px;width:8px;height:20px;border-radius:4px;background:#c88a2a"></div></div>
<div class="t" style="left:30px;top:833.4px;font-size:29px;color:#fff;transform:scaleX(0.9296);transform-origin:0 50%;">Nano Banana PRO</div>
<div class="abs" style="left:284.600px;top:821px;width:253.700px;height:60px;border-radius:8px;overflow:hidden;background:linear-gradient(90deg,#4458c8 0,#4a62d4 45%,#3d55c4 100%)"><div class="abs" style="left:92px;top:10px;width:78px;height:70px;border-radius:38px 38px 20px 20px;background:#2a1c14"></div><div class="abs" style="left:108px;top:24px;width:50px;height:56px;border-radius:24px;background:#b9805f"></div><div class="abs" style="left:196px;top:6px;width:16px;height:16px;border-radius:4px;background:linear-gradient(135deg,#f7a13a,#e85ca0,#6aa8f0)"></div><div class="abs" style="left:186px;top:16px;width:17px;height:17px;border-radius:4px;background:#74b89a"></div><div class="abs" style="left:205px;top:18px;width:17px;height:17px;border-radius:4px;background:#f4f6fb"></div></div>
<div class="t" style="left:448px;top:829.6px;font-size:6.5px;color:#e8ecff;font-weight:bold;transform:scaleX(1.1725);transform-origin:0 50%;">week 3</div>
<div class="abs" style="left:550.700px;top:821px;width:253.300px;height:60px;border-radius:8px;overflow:hidden;background:#050505"><div class="abs" style="left:16px;top:15px;width:174px;height:50px;background:#1c1c1e"></div><div class="abs" style="left:16px;top:15.500px;width:232px;height:2.200px;background:#7d8389"></div><div class="abs" style="left:40px;top:26px;width:92px;height:40px;background:#ededed"></div><div class="abs" style="left:134px;top:26px;width:32px;height:40px;background:#d9d9d9"></div><div class="abs" style="left:208px;top:34px;width:42px;height:30px;background:#5d6660"></div><div class="abs" style="left:216px;top:7px;width:6px;height:5.500px;border-radius:3px;background:#f08a3a"></div></div>
<div class="t" style="left:776.5px;top:829.5px;font-size:6.2px;color:#c8c8c8;font-weight:bold;transform:scaleX(0.9615);transform-origin:0 50%;">lovable</div>
<div class="abs" style="left:823px;top:540px;width:1px;height:333px;background:#ececec"></div>
<div class="abs" style="left:0;top:871px;width:823px;height:2px;background:#cfcfcf"></div>
  <div id="lside"></div>
<svg style="left:831px;top:42.3px" width="16" height="14" viewBox="0 0 16 14" fill="none" stroke="#3b3d42" stroke-width="1.300"><rect x="1" y="1" width="14" height="12" rx="2"/><path d="M6 1 V13"/><path d="M3 4 h1 M3 6.300 h1 M3 8.600 h1" stroke-width="1" stroke-linecap="round"/></svg>
<div class="abs" style="left:827px;top:68.4px;width:24px;height:24px;border-radius:7px;background:#fff;border:1px solid #ededf0"></div>
<div class="abs" style="left:827px;top:96.5px;width:24px;height:24px;border-radius:7px;background:#fff;border:1px solid #ededf0"></div>
<div class="abs" style="left:827px;top:124px;width:24px;height:24px;border-radius:7px;background:#fff;border:1px solid #ededf0"></div>
<div class="abs" style="left:827px;top:152px;width:24px;height:24px;border-radius:7px;background:#fff;border:1px solid #ededf0"></div>
<div class="abs" style="left:827px;top:179px;width:24px;height:24px;border-radius:7px;background:#fff;border:1px solid #ededf0"></div>
<div class="abs" style="left:827px;top:207px;width:24px;height:24px;border-radius:7px;background:#fff;border:1px solid #ededf0"></div>
<div class="abs" style="left:827px;top:235px;width:24px;height:24px;border-radius:7px;background:#fff;border:1px solid #ededf0"></div>
<svg style="left:832px;top:74.9px" width="14" height="11" viewBox="0 0 14 11" fill="none" stroke-width="2.300"><path d="M1.200 10.500 V2" stroke="#4285f4"/><path d="M12.800 10.500 V2" stroke="#34a853"/><path d="M1.200 1.800 L7 6.300 L12.800 1.800" stroke="#ea4335" stroke-linejoin="round"/></svg>
<svg style="left:832.5px;top:102.0px" width="13" height="13" viewBox="0 0 13 13"><rect width="13" height="13" rx="1.500" fill="#4285f4"/><rect x="10" y="3" width="3" height="7" fill="#fbbc04"/><rect x="3" y="10" width="7" height="3" fill="#34a853"/><rect x="0" y="10" width="3" height="3" fill="#188038"/><rect x="10" y="10" width="3" height="3" fill="#ea4335"/><rect x="3" y="3" width="7" height="7" fill="#fff"/><text x="6.500" y="8.900" font-size="6.500" font-weight="bold" font-family="Liberation Sans,sans-serif" fill="#4285f4" text-anchor="middle">4</text></svg>
<svg style="left:830px;top:127px" width="18" height="18" viewBox="0 0 18 18"><circle cx="9" cy="9" r="6.2" fill="#fff" stroke="#6a6d73" stroke-width=".85" stroke-dasharray="2.300 1.200"/><g transform="translate(9 9) scale(.84) translate(-9 -9)"><path d="M9 5 L12.500 11 H5.500 Z" fill="#fbbc04"/><path d="M9 5 L7.200 8 L5.500 11 L7 11 L9.800 6.300 Z" fill="#34a853"/><path d="M5.500 11 H12.500 L11.700 9.500 H6.400 Z" fill="#4285f4"/></g></svg>
<svg style="left:831px;top:155px" width="16" height="18" viewBox="0 0 16 18"><path d="M3.500 6 a4.500 4.500 0 0 1 9 0" fill="none" stroke="#f38b00" stroke-width="1.800" stroke-linecap="round"/><text x="8" y="16" font-size="11" font-weight="bold" font-family="Liberation Sans,sans-serif" fill="#0a2a6b" text-anchor="middle">W</text></svg>
<svg style="left:830px;top:182px" width="18" height="18" viewBox="0 0 18 18"><circle cx="9" cy="9" r="6.2" fill="#fff" stroke="#6a6d73" stroke-width=".85" stroke-dasharray="2.300 1.200"/><g transform="translate(9 9) scale(.84) translate(-9 -9)"><rect x="6.800" y="4.800" width="2.300" height="2.800" rx="1" fill="#f24e1e"/><rect x="9.100" y="4.800" width="2.300" height="2.800" rx="1" fill="#ff7262"/><rect x="6.800" y="7.600" width="2.300" height="2.800" rx="1" fill="#a259ff"/><circle cx="10.250" cy="9" r="1.300" fill="#1abcfe"/><rect x="6.800" y="10.400" width="2.300" height="2.800" rx="1" fill="#0acf83"/></g></svg>
<svg style="left:833px;top:211px" width="14" height="16" viewBox="0 0 14 16"><text x="0.500" y="12.500" font-size="13" font-weight="bold" font-family="Liberation Sans,sans-serif" fill="#1d1d2b">t</text><circle cx="8.300" cy="11.300" r="1.300" fill="#ff3e8d"/></svg>
<svg style="left:830px;top:238px" width="18" height="18" viewBox="0 0 18 18"><circle cx="9" cy="9" r="6.2" fill="#fff" stroke="#6a6d73" stroke-width=".85" stroke-dasharray="2.300 1.200"/><g transform="translate(9 9) scale(.84) translate(-9 -9)"><circle cx="9" cy="9" r="4.600" fill="#e8f0fd"/><text x="9" y="11.200" font-size="6" font-weight="bold" font-family="Liberation Sans,sans-serif" fill="#2b6fd6" text-anchor="middle">W</text></g></svg>
<svg style="left:830px;top:269px" width="18" height="18" viewBox="0 0 18 18"><circle cx="9" cy="9" r="6.2" fill="#fff" stroke="#6a6d73" stroke-width=".85" stroke-dasharray="2.300 1.200"/><g transform="translate(9 9) scale(.84) translate(-9 -9)"><circle cx="9" cy="9" r="5.200" fill="#18181a"/><text x="9" y="10.600" font-size="4" font-weight="bold" font-family="Liberation Sans,sans-serif" fill="#fff" text-anchor="middle">ABA</text></g></svg>
<svg style="left:832.5px;top:299.5px" width="13" height="13" viewBox="0 0 18 18"><defs><linearGradient id="lh0" x1="0" y1="0" x2="0" y2="1"><stop offset="0" stop-color="#fe7b02"/><stop offset=".45" stop-color="#fe5a3c"/><stop offset=".7" stop-color="#f857a6"/><stop offset="1" stop-color="#6f7cff"/></linearGradient></defs><path d="M5.400 0.800 C8 0.800 9.800 2.800 9.800 5.300 V6.800 H11.400 C14 6.800 16.800 8.600 16.800 11.300 C16.800 14.800 14.500 16.600 11.400 16.600 H1.200 V5.300 C1.200 2.800 2.900 0.800 5.400 0.800 Z" fill="url(#lh0)"/></svg>
<svg style="left:832.5px;top:327.0px" width="13" height="13" viewBox="0 0 18 18"><defs><linearGradient id="lh1" x1="0" y1="0" x2="0" y2="1"><stop offset="0" stop-color="#fe7b02"/><stop offset=".45" stop-color="#fe5a3c"/><stop offset=".7" stop-color="#f857a6"/><stop offset="1" stop-color="#6f7cff"/></linearGradient></defs><path d="M5.400 0.800 C8 0.800 9.800 2.800 9.800 5.300 V6.800 H11.400 C14 6.800 16.800 8.600 16.800 11.300 C16.800 14.800 14.500 16.600 11.400 16.600 H1.200 V5.300 C1.200 2.800 2.900 0.800 5.400 0.800 Z" fill="url(#lh1)"/></svg>
<svg style="left:832.5px;top:354.5px" width="13" height="13" viewBox="0 0 18 18"><defs><linearGradient id="lh2" x1="0" y1="0" x2="0" y2="1"><stop offset="0" stop-color="#fe7b02"/><stop offset=".45" stop-color="#fe5a3c"/><stop offset=".7" stop-color="#f857a6"/><stop offset="1" stop-color="#6f7cff"/></linearGradient></defs><path d="M5.400 0.800 C8 0.800 9.800 2.800 9.800 5.300 V6.800 H11.400 C14 6.800 16.800 8.600 16.800 11.300 C16.800 14.800 14.500 16.600 11.400 16.600 H1.200 V5.300 C1.200 2.800 2.900 0.800 5.400 0.800 Z" fill="url(#lh2)"/></svg>
<div class="abs" style="left:827px;top:377px;width:24px;height:24px;border-radius:7px;background:#ececf1;border:1px solid #ececf1"></div>
<svg style="left:832.8px;top:384.6px" width="12.400" height="8.800" viewBox="0 0 15 11"><rect width="15" height="11" rx="3" fill="#ff0033"/><path d="M6 3.100 L10 5.500 L6 7.900 Z" fill="#fff"/></svg>
<svg style="left:833px;top:410.5px" width="12" height="12" viewBox="0 0 13 13"><rect width="13" height="13" fill="#0a0a0a"/><ellipse cx="6.500" cy="7" rx="2.200" ry="3" fill="none" stroke="#fff" stroke-width=".9"/><path d="M2 3.500 L4.500 5.500 M11 3.500 L8.500 5.500 M1.800 7 H4.300 M8.700 7 H11.200 M2 10.500 L4.500 8.500 M11 10.500 L8.500 8.500 M5 3 a1.500 1.500 0 0 1 3 0" stroke="#fff" stroke-width=".8" fill="none"/></svg>
<svg style="left:830px;top:435px" width="18" height="18" viewBox="0 0 18 18"><circle cx="9" cy="9" r="6.2" fill="#fff" stroke="#6a6d73" stroke-width=".85" stroke-dasharray="2.300 1.200"/><g transform="translate(9 9) scale(.84) translate(-9 -9)"><circle cx="9" cy="9" r="3.800" fill="#8a8d92"/><circle cx="9" cy="9" r="1.800" fill="#d8d8dc"/></g></svg>
<svg style="left:830px;top:463px" width="18" height="18" viewBox="0 0 18 18"><circle cx="9" cy="9" r="6.2" fill="#fff" stroke="#6a6d73" stroke-width=".85" stroke-dasharray="2.300 1.200"/><g transform="translate(9 9) scale(.84) translate(-9 -9)"><circle cx="9" cy="9" r="4.800" fill="#e8a23a"/><path d="M9 9 L9 4.200 A4.800 4.800 0 0 1 13.800 9 Z" fill="#d8452e"/><path d="M9 9 L4.200 9 A4.800 4.800 0 0 0 9 13.800 Z" fill="#4a78d8"/></g></svg>
<svg style="left:830px;top:491px" width="18" height="18" viewBox="0 0 18 18"><circle cx="9" cy="9" r="6.2" fill="#fff" stroke="#6a6d73" stroke-width=".85" stroke-dasharray="2.300 1.200"/><g transform="translate(9 9) scale(.84) translate(-9 -9)"><circle cx="9" cy="9" r="4.800" fill="#3b6ee0"/><circle cx="10.300" cy="10.300" r="2.400" fill="#e0473a"/><circle cx="8" cy="8" r="1.700" fill="#fff"/></g></svg>
<svg style="left:832px;top:522.0px" width="14" height="11" viewBox="0 0 14 11" fill="none" stroke="#a258e8" stroke-width="1.400" stroke-linejoin="round"><rect x="1" y="1" width="12" height="9" rx="1.200"/><path d="M1.300 1.800 L7 6.200 L12.700 1.800"/></svg>
<svg style="left:830px;top:546px" width="18" height="18" viewBox="0 0 18 18"><circle cx="9" cy="9" r="6.2" fill="#fff" stroke="#6a6d73" stroke-width=".85" stroke-dasharray="2.300 1.200"/><g transform="translate(9 9) scale(.84) translate(-9 -9)"><circle cx="9" cy="9" r="4.600" fill="#f0d9d2"/><path d="M9 5.500 a3.500 3.500 0 1 0 3.500 3.500 a2.200 2.200 0 1 0 -2.200 2.200" fill="none" stroke="#c9503c" stroke-width="1.100"/></g></svg>
<svg style="left:832.8px;top:578.6px" width="12.400" height="8.800" viewBox="0 0 15 11"><rect width="15" height="11" rx="3" fill="#ff0033"/><path d="M6 3.100 L10 5.500 L6 7.900 Z" fill="#fff"/></svg>
<svg style="left:830px;top:602px" width="18" height="18" viewBox="0 0 18 18"><circle cx="9" cy="9" r="6.2" fill="#fff" stroke="#6a6d73" stroke-width=".85" stroke-dasharray="2.300 1.200"/><g transform="translate(9 9) scale(.84) translate(-9 -9)"><path d="M6 7.500 q3 -2.500 6 0 M6 10.500 q3 2.500 6 0" stroke="#2f8fe0" stroke-width="1.600" fill="none" stroke-linecap="round"/></g></svg>
<svg style="left:830px;top:629.5px" width="18" height="18" viewBox="0 0 18 18"><circle cx="9" cy="9" r="6.2" fill="#fff" stroke="#6a6d73" stroke-width=".85" stroke-dasharray="2.300 1.200"/><g transform="translate(9 9) scale(.84) translate(-9 -9)"><text x="9" y="12.300" font-size="9.500" font-weight="bold" font-family="Liberation Serif,serif" fill="#8a3b1e" text-anchor="middle">h</text></g></svg>
<svg style="left:830px;top:657px" width="18" height="18" viewBox="0 0 18 18"><circle cx="9" cy="9" r="6.2" fill="#fff" stroke="#6a6d73" stroke-width=".85" stroke-dasharray="2.300 1.200"/><g transform="translate(9 9) scale(.84) translate(-9 -9)"><text x="9" y="12.300" font-size="9.500" font-family="Liberation Serif,serif" fill="#333" text-anchor="middle">L</text></g></svg>
<svg style="left:830px;top:685px" width="18" height="18" viewBox="0 0 18 18"><circle cx="9" cy="9" r="6.2" fill="#fff" stroke="#6a6d73" stroke-width=".85" stroke-dasharray="2.300 1.200"/><g transform="translate(9 9) scale(.84) translate(-9 -9)"><circle cx="9" cy="9" r="4.500" fill="#cfe0ee"/><circle cx="9" cy="9" r="2.200" fill="#8fb2d0"/></g></svg>
<svg style="left:832.5px;top:715px" width="13" height="14" viewBox="0 0 13 14"><path d="M0.500 0.500 H12.500 V8 C12.500 11 9.500 13 6.500 13.800 C3.500 13 0.500 11 0.500 8 Z" fill="#e8662a"/><circle cx="6.500" cy="8" r="3.400" fill="#1c1c1c"/><rect x="2.500" y="1.500" width="8" height="3" fill="#f4b43a"/><circle cx="6.500" cy="8" r="1.600" fill="#f0e6d8"/></svg>
<svg style="left:831px;top:744px" width="17" height="10" viewBox="0 0 17 10"><text x="8.500" y="8" font-size="8" font-weight="bold" font-style="italic" font-family="Liberation Sans,sans-serif" fill="#5b2dbf" text-anchor="middle" letter-spacing="-.5">GCU</text></svg>
<svg style="left:832px;top:770px" width="14" height="14" viewBox="0 0 14 14"><circle cx="7" cy="7" r="6.800" fill="#f06a25"/><path d="M0.500 8.500 H13.500 M1.500 11 H12.500" stroke="#fbd9c2" stroke-width="1"/></svg>
<div class="abs" style="left:827px;top:793px;width:24px;height:1px;background:#e6e6ea;"></div>
<svg style="left:834px;top:803.5px" width="10" height="10" viewBox="0 0 10 10" stroke="#44464c" stroke-width="1.100" stroke-linecap="round"><path d="M5 0.500 V9.500 M0.500 5 H9.500"/></svg>
</div>

<div id="gap"><div class="abs" style="left:0;top:0;width:8px;height:6px;background:#eaeaea"></div>
<div class="abs" style="left:0;top:5px;width:8px;height:75px;background:linear-gradient(#93acb6,#a3b7be 65%,#bcc3c6)"></div>
<div class="abs" style="left:-2px;top:116px;width:9px;height:9px;border-radius:50%;border:1.500px solid #111;background:radial-gradient(#111 0 2px,#fff 2.500px)"></div>
<div class="abs" style="left:0;top:550px;width:8px;height:33px;background:#5a2d91"></div>
<div class="abs" style="left:0;top:628px;width:8px;height:1px;background:#aaa"></div>
<div class="t" style="left:1px;top:631px;font-size:9px;color:#333">ng</div><div class="t" style="left:0;top:644px;font-size:9px;color:#333">ns</div>
<div class="abs" style="left:0;top:756px;width:8px;height:22px;background:#d6d6d6"></div>
<div class="abs" style="left:0;top:777.500px;width:8px;height:18px;background:#0c0c0c"></div>
<div class="abs" style="left:0;top:795px;width:8px;height:78px;background:linear-gradient(#3a4650,#2d3842 35%,#3f4d5c 70%,#2f3b48)"></div></div>

<!-- ================= RIGHT WINDOW (OneNote) ================= -->
<div id="rw">
<div class="abs" style="left:-863px;top:0;width:1715px;height:873px">
<div class="abs" style="left:863px;top:0px;width:852px;height:5px;background:linear-gradient(#e9e9e9,#f1f1f1);"></div>
<div class="abs" style="left:855px;top:0px;width:8px;height:34px;background:transparent;"></div>
<div class="abs" style="left:863px;top:5px;width:852px;height:29px;background:#fff;border-radius:6px 6px 0 0"></div>
<div class="abs" style="left:878.7px;top:14px;width:9.800px;height:9.800px;border-radius:50%;background:#fe5f57"></div>
<div class="abs" style="left:894.0px;top:14px;width:9.800px;height:9.800px;border-radius:50%;background:#f1a431"></div>
<div class="abs" style="left:909.5px;top:14px;width:9.800px;height:9.800px;border-radius:50%;background:#5ac138"></div>
<svg style="left:935px;top:11.500px" width="64" height="15" viewBox="0 0 64 15" fill="none" stroke-width="1.400" stroke-linecap="round" stroke-linejoin="round"><path d="M9.800 2 L4.300 7.500 L9.800 13" stroke="#45474d"/><path d="M27.300 2 L32.800 7.500 L27.300 13" stroke="#c0c0c4"/><path d="M58.500 7.500 a5.700 5.700 0 1 1 -2 -4.300 M57.700 0.800 v3 h-3" stroke="#45474d"/></svg>
<svg style="left:1079px;top:11.500px" width="12" height="15" viewBox="0 0 12 15" fill="none" stroke="#45474d" stroke-width="1.400" stroke-linejoin="round"><path d="M1.500 1.500 h9 v11.500 l-4.500 -3.200 l-4.500 3.200 z"/></svg>
<div class="urlbar" style="left:1103px;width:358px"></div>
<svg style="left:1108.500px;top:12.500px" width="13" height="13" viewBox="0 0 13 13" fill="none" stroke="#333" stroke-width="1.200" stroke-linecap="round"><circle cx="3.600" cy="3.600" r="1.700"/><path d="M6.600 3.600 H12"/><circle cx="9.400" cy="9.400" r="1.700"/><path d="M1 9.400 H6.400"/></svg>
<div class="t" style="left:1132px;top:12.7px;font-size:12.4px;color:#43434b;transform:scaleX(0.9236);transform-origin:0 50%;"><span style="color:#1b1b20">onedrive.live.com</span>/edit.aspx?resid=6858C6E5...</div>
<svg style="left:1385.500px;top:10.500px" width="12" height="15" viewBox="0 0 12 15" fill="none" stroke="#45474d" stroke-width="1.200" stroke-linecap="round" stroke-linejoin="round"><path d="M6 1 V9 M3.300 3.400 L6 0.800 L8.700 3.400"/><path d="M3.500 5.500 H1.500 V13.500 H10.500 V5.500 H8.500"/></svg>
<div class="abs" style="left:1404.5px;top:12px;width:1px;height:13px;background:#c9c9d2;"></div>
<svg style="left:1411.500px;top:9.500px" width="20" height="18" viewBox="0 0 20 18"><path d="M3 4.500 L4.500 2.800 L6 3.400 L8 2.200 L10 3.400 L11.500 2.800 L13 4.500 L12.400 6 L13 8.200 L11.500 13 L8 16.200 L4.500 13 L3 8.200 L3.600 6 Z" fill="#f1562b"/><path d="M5.600 6.300 h4.800 l-1 2.400 l0.600 1.600 l-2 1.600 l-2 -1.600 l0.600 -1.600 z" fill="#fff" opacity=".9"/><circle cx="13.800" cy="4.200" r="4" fill="#5e6067"/><text x="13.800" y="6.400" font-size="6.500" font-family="Liberation Sans,sans-serif" fill="#fff" text-anchor="middle" font-weight="bold">8</text></svg>
<svg style="left:1438.500px;top:11.500px" width="15" height="14" viewBox="0 0 15 14"><path d="M7.500 1 L14 13 H1 Z" fill="none" stroke="#e4402f" stroke-width="2" stroke-linejoin="round"/><path d="M4.200 13 H10.800" stroke="#662d91" stroke-width="2.200"/><path d="M1.400 12.600 L4.600 6.600" stroke="#9e1f63" stroke-width="2"/><path d="M7.500 6 L9.800 10.500 H5.200 Z" fill="#fff"/></svg>
<svg style="left:1516px;top:11.500px" width="192" height="15" viewBox="0 0 192 15" fill="none" stroke="#45474d" stroke-width="1.250" stroke-linecap="round" stroke-linejoin="round"><g stroke="#9a9ca2"><rect x="1.500" y="2" width="12" height="11" rx="1.200"/><path d="M1.500 4.600 h12"/><circle cx="7.200" cy="8.600" r="1.600"/><path d="M8.400 9.800 l1.300 1.300"/></g><path d="M25.600 2 v11" stroke="#d0d0d4"/><path d="M44.300 2 v8 M40.800 6.800 l3.500 3.400 l3.500 -3.400 M38.300 10.500 v2.300 h12 v-2.300"/><path d="M64.500 11.500 v-8.500 l7.500 -1.600 v8.500"/><circle cx="62.800" cy="11.600" r="1.800"/><circle cx="70.300" cy="10" r="1.800"/><rect x="84.400" y="2" width="12" height="11" rx="1.200"/><path d="M91.400 2 h5 v11 h-5 z" fill="#45474d" stroke="none"/><path d="M107.600 4.500 v7.300 a1.200 1.200 0 0 0 1.200 1.200 h9.600 a1.200 1.200 0 0 0 1.200 -1.200 v-6.100 a1.200 1.200 0 0 0 -1.200 -1.200 h-10.800 v-1.300 a1.200 1.200 0 0 1 1.200 -1.200 h8.300 v2.500"/><path d="M119.600 7 h-3.500 v3.200 h3.500"/><path d="M136.500 1.500 l1.600 4 l4 1.600 l-4 1.600 l-1.600 4 l-1.600 -4 l-4 -1.600 l4 -1.600 z"/><path d="M142 10.500 v3 M140.500 12 h3"/><path d="M160.200 1.200 l5.200 1.800 v4.500 c0 3 -2.300 5.200 -5.200 6.300 c-2.900 -1.100 -5.200 -3.300 -5.200 -6.300 v-4.500 z"/><path d="M157.800 6.200 q2.400 -1.800 4.800 0 M158.700 8 q1.500 -1 3 0" stroke-width="1"/><circle cx="160.200" cy="9.800" r=".6" fill="#45474d" stroke="none"/><path d="M177.500 3.500 h12.500 M177.500 7.500 h12.500 M177.500 11.500 h12.500" stroke="#8c8e94"/></svg>
<div class="abs" style="left:874.9px;top:47.2px;width:2.800px;height:2.800px;border-radius:50%;background:#222"></div>
<div class="abs" style="left:879.6px;top:47.2px;width:2.800px;height:2.800px;border-radius:50%;background:#222"></div>
<div class="abs" style="left:884.3px;top:47.2px;width:2.800px;height:2.800px;border-radius:50%;background:#222"></div>
<div class="abs" style="left:874.9px;top:51.9px;width:2.800px;height:2.800px;border-radius:50%;background:#222"></div>
<div class="abs" style="left:879.6px;top:51.9px;width:2.800px;height:2.800px;border-radius:50%;background:#222"></div>
<div class="abs" style="left:884.3px;top:51.9px;width:2.800px;height:2.800px;border-radius:50%;background:#222"></div>
<div class="abs" style="left:874.9px;top:56.6px;width:2.800px;height:2.800px;border-radius:50%;background:#222"></div>
<div class="abs" style="left:879.6px;top:56.6px;width:2.800px;height:2.800px;border-radius:50%;background:#222"></div>
<div class="abs" style="left:884.3px;top:56.6px;width:2.800px;height:2.800px;border-radius:50%;background:#222"></div>
<svg style="left:902.500px;top:47px" width="13" height="13" viewBox="0 0 13 13"><rect x="3.500" y="0.300" width="9" height="12.400" rx="1.400" fill="#ca64ea"/><rect x="8" y="3.600" width="4.500" height="3" fill="#ae4bd5"/><rect x="8" y="6.600" width="4.500" height="3" fill="#9332bf"/><rect x="0.300" y="3" width="7.400" height="7.400" rx="1" fill="#7719aa"/><text x="4" y="8.900" font-size="6" font-weight="bold" font-family="Liberation Sans,sans-serif" fill="#fff" text-anchor="middle">N</text></svg>
<div class="t" style="left:927.9px;top:48.1px;font-size:12.6px;color:#3a3a3a;transform:scaleX(0.8359);transform-origin:0 50%;">Character Simulation</div>
<svg style="left:1029.1px;top:52.7px" width="7" height="4.2" viewBox="0 0 7 4.2" fill="none" stroke="#555" stroke-width="1.1" stroke-linecap="round" stroke-linejoin="round"><path d="M0.600 0.600 L3.5 3.6 L6.4 0.600"/></svg>
<svg style="left:1584.800px;top:47px" width="13" height="13" viewBox="0 0 13 13" fill="none" stroke="#333" stroke-width="1"><circle cx="6.500" cy="6.500" r="1.900"/><path d="M5.500 0.800 h2 l0.350 1.500 l1.300 0.550 l1.300 -0.800 l1.400 1.400 l-0.800 1.300 l0.550 1.300 l1.500 0.350 v2 l-1.500 0.350 l-0.550 1.300 l0.800 1.300 l-1.400 1.400 l-1.300 -0.800 l-1.300 0.550 l-0.350 1.500 h-2 l-0.350 -1.500 l-1.300 -0.550 l-1.300 0.800 l-1.400 -1.400 l0.800 -1.300 l-0.550 -1.300 l-1.500 -0.350 v-2 l1.500 -0.350 l0.550 -1.300 l-0.800 -1.300 l1.400 -1.400 l1.300 0.800 l1.300 -0.550 z" stroke-linejoin="round"/></svg>
<svg style="left:1622.300px;top:47.200px" width="12" height="13" viewBox="0 0 12 13" fill="none" stroke="#222" stroke-width="1.100" stroke-linejoin="round"><path d="M6 0.800 a3.600 3.600 0 0 0 -3.600 3.600 v3 l-1.200 2.200 h9.600 l-1.200 -2.200 v-3 a3.600 3.600 0 0 0 -3.600 -3.600 z"/><path d="M4.600 10.500 a1.400 1.400 0 0 0 2.800 0"/></svg>
<div class="abs" style="left:1653.500px;top:41.600px;width:24.200px;height:24.200px;border-radius:50%;overflow:hidden;background:linear-gradient(#cdc6d8,#bdb3c6)"><div class="abs" style="left:5.500px;top:3.500px;width:13px;height:18px;border-radius:6.500px 6.500px 3px 3px;background:#7a4a33"></div><div class="abs" style="left:8.300px;top:6px;width:7.500px;height:9px;border-radius:50%;background:#e7c3ae"></div><div class="abs" style="left:4px;top:16px;width:16px;height:10px;border-radius:7px 7px 0 0;background:#2b2750"></div></div>
<div class="t" style="left:877.5px;top:79.3px;font-size:12.2px;color:#505050;transform:scaleX(0.7995);transform-origin:0 50%;">File</div>
<div class="t" style="left:911.3px;top:79.3px;font-size:12.2px;color:#242424;font-weight:bold;transform:scaleX(0.8712);transform-origin:0 50%;">Home</div>
<div class="t" style="left:958.5px;top:79.3px;font-size:12.2px;color:#505050;transform:scaleX(0.8727);transform-origin:0 50%;">Insert</div>
<div class="t" style="left:1003.4px;top:79.3px;font-size:12.2px;color:#505050;transform:scaleX(0.8615);transform-origin:0 50%;">Draw</div>
<div class="t" style="left:1045.8px;top:79.3px;font-size:12.2px;color:#505050;transform:scaleX(0.8666);transform-origin:0 50%;">View</div>
<div class="t" style="left:1086.5px;top:79.3px;font-size:12.2px;color:#505050;transform:scaleX(0.8737);transform-origin:0 50%;">Help</div>
<div class="abs" style="left:911.3px;top:93.8px;width:29.5px;height:1.6px;background:#7719aa;border-radius:1px"></div>
<div class="abs" style="left:1130.200px;top:73.800px;width:174.700px;height:23.800px;border-radius:4px;background:#fff"></div>
<svg style="left:1140.500px;top:79.500px" width="10" height="14" viewBox="0 0 10 14" fill="none" stroke="#444" stroke-width="1" stroke-linejoin="round"><path d="M5 0.800 a4 4 0 0 0 -2.300 7.300 v1.900 h4.600 v-1.900 a4 4 0 0 0 -2.300 -7.300 z"/><path d="M3.300 11.800 h3.400 M3.900 13.200 h2.200"/></svg>
<div class="t" style="left:1161.5px;top:80.8px;font-size:11.8px;color:#5a5a5a;transform:scaleX(0.9178);transform-origin:0 50%;">Tell me what you want to do</div>
<svg style="left:1506.500px;top:79.500px" width="17" height="13" viewBox="0 0 17 13"><path d="M4.200 10 A3 3 0 0 1 3.900 4.100 A4.200 4.200 0 0 1 11.800 3.800 A3.100 3.100 0 0 1 13 9.600" fill="none" stroke="#444" stroke-width="1"/><circle cx="11" cy="9.300" r="3" fill="#3aa845"/><path d="M9.600 9.300 l1 1 l1.800 -1.900" stroke="#fff" stroke-width=".9" fill="none"/></svg>
<div class="abs" style="left:1537.600px;top:74.800px;width:69.100px;height:18.800px;border-radius:4px;background:#fff;border:1px solid #d1d1d1"></div>
<svg style="left:1544px;top:78.500px" width="12" height="12" viewBox="0 0 12 12" fill="none" stroke="#333" stroke-width="1" stroke-linejoin="round"><path d="M1 11 L1.800 8 L8.800 1 a1.100 1.100 0 0 1 1.600 0 l0.600 0.600 a1.100 1.100 0 0 1 0 1.600 L4 10.200 Z"/></svg>
<div class="t" style="left:1559.8px;top:79.8px;font-size:10.4px;color:#333;transform:scaleX(0.8624);transform-origin:0 50%;">Editing</div>
<svg style="left:1592.3px;top:83.1px" width="6.5" height="3.8" viewBox="0 0 6.5 3.8" fill="none" stroke="#333" stroke-width="1" stroke-linecap="round" stroke-linejoin="round"><path d="M0.600 0.600 L3.25 3.1999999999999997 L5.9 0.600"/></svg>
<div class="abs" style="left:1613.500px;top:74.800px;width:64px;height:18.800px;border-radius:4px;background:#7719aa"></div>
<svg style="left:1619.500px;top:78.500px" width="12" height="12" viewBox="0 0 12 12" fill="none" stroke="#fff" stroke-width="1" stroke-linejoin="round" stroke-linecap="round"><path d="M4 3.500 H2.200 a1 1 0 0 0 -1 1 v5.300 a1 1 0 0 0 1 1 h6.600 a1 1 0 0 0 1 -1 V8.500"/><path d="M7.500 0.800 L10.800 3.800 L7.500 6.800 V5 C5.500 5 4.300 5.800 3.500 7.300 C3.700 4.800 5 3 7.500 2.700 Z"/></svg>
<div class="t" style="left:1635.9px;top:79.8px;font-size:10.4px;color:#fff;transform:scaleX(0.7971);transform-origin:0 50%;">Share</div>
<svg style="left:1662.3px;top:83.1px" width="6.5" height="3.8" viewBox="0 0 6.5 3.8" fill="none" stroke="#fff" stroke-width="1" stroke-linecap="round" stroke-linejoin="round"><path d="M0.600 0.600 L3.25 3.1999999999999997 L5.9 0.600"/></svg>
<div class="abs" style="left:863px;top:131px;width:37.4px;height:742px;background:#f0f0f0;"></div>
<div class="abs" style="left:863px;top:131px;width:37.4px;height:33.4px;background:#fff;"></div>
<div class="abs" style="left:863px;top:131px;width:2.3px;height:33.4px;background:#7719aa;"></div>
<svg style="left:875.500px;top:140.500px" width="14" height="13" viewBox="0 0 14 13" fill="#7719aa"><rect x="0.300" y="0.500" width="2.600" height="12"/><rect x="4.200" y="0.500" width="2.600" height="12"/><path d="M7.800 1.300 L10.200 0.500 L13.800 11.700 L11.400 12.500 Z"/></svg>
<svg style="left:874.500px;top:174.500px" width="14" height="14" viewBox="0 0 14 14" fill="none" stroke="#222" stroke-width="1.200" stroke-linecap="round"><circle cx="8.300" cy="5.700" r="4.200"/><path d="M5.200 8.800 L1 13"/></svg>
<svg style="left:876px;top:855.500px" width="9" height="12" viewBox="0 0 9 12" fill="none" stroke="#555" stroke-width="1"><rect x="0.800" y="0.800" width="7.400" height="10.400" rx="1"/><path d="M3.200 9.500 h2.600"/></svg>
<div class="abs" style="left:900.4px;top:131px;width:290px;height:742px;background:#fafafa;"></div>
<div class="abs" style="left:900.4px;top:131px;width:1px;height:742px;background:#e4e4e4;"></div>
<div class="abs" style="left:1190.4px;top:131px;width:1px;height:742px;background:#e1e1e1;"></div>
<div class="abs" style="left:900.4px;top:164.2px;width:290px;height:1px;background:#e3e3e3;"></div>
<div class="abs" style="left:1045.3px;top:165px;width:1px;height:708px;background:#e3e3e3;"></div>
<div class="abs" style="left:900.4px;top:193.2px;width:290px;height:1px;background:#ededed;"></div>
<svg style="left:908.500px;top:140.500px" width="13" height="13" viewBox="0 0 13 13"><rect x="0.500" y="0.500" width="9.800" height="12" rx="1.400" fill="#4a4a4a"/><rect x="2" y="2.500" width="6.500" height="2" fill="#fafafa" opacity=".85"/><rect x="11.200" y="1.500" width="1.300" height="2.400" fill="#4a4a4a"/><rect x="11.200" y="5.300" width="1.300" height="2.400" fill="#4a4a4a"/><rect x="11.200" y="9.100" width="1.300" height="2.400" fill="#4a4a4a"/></svg>
<div class="t" style="left:928.7px;top:142.1px;font-size:10.6px;color:#262626;font-weight:bold;transform:scaleX(0.9394);transform-origin:0 50%;">Character Simulation</div>
<svg style="left:1036.5px;top:145.4px" width="7" height="4.2" viewBox="0 0 7 4.2" fill="none" stroke="#333" stroke-width="1.1" stroke-linecap="round" stroke-linejoin="round"><path d="M0.600 0.600 L3.5 3.6 L6.4 0.600"/></svg>
<svg style="left:915.7px;top:174.8px" width="9" height="9" viewBox="0 0 9 9" stroke="#7719aa" stroke-width="1" stroke-linecap="round"><path d="M4.500 0.500 V8.500 M0.500 4.500 H8.500"/></svg>
<div class="t" style="left:932.8px;top:174.5px;font-size:10.3px;color:#7719aa;transform:scaleX(0.9664);transform-origin:0 50%;">Add section</div>
<svg style="left:1060.8px;top:174.8px" width="9" height="9" viewBox="0 0 9 9" stroke="#7719aa" stroke-width="1" stroke-linecap="round"><path d="M4.500 0.500 V8.500 M0.500 4.500 H8.500"/></svg>
<div class="t" style="left:1078px;top:174.5px;font-size:10.3px;color:#7719aa;transform:scaleX(0.9662);transform-origin:0 50%;">Add page</div>
<div class="abs" style="left:901.4px;top:304.2px;width:143.9px;height:27.6px;background:#e6e6e6;"></div>
<svg style="left:906.500px;top:197px" width="7" height="20" viewBox="0 0 7 20"><path d="M6.800 0.300 V19.700 L1.800 17.800 Q0.300 17.200 0.300 15.600 V4.400 Q0.300 2.800 1.800 2.200 Z" fill="#c0188c"/></svg>
<div class="t" style="left:928.7px;top:202.8px;font-size:10.3px;color:#444;transform:scaleX(0.9603);transform-origin:0 50%;">SQL Migration</div>
<svg style="left:906.500px;top:224.8px" width="7" height="20" viewBox="0 0 7 20"><path d="M6.800 0.300 V19.700 L1.800 17.800 Q0.300 17.200 0.300 15.600 V4.400 Q0.300 2.800 1.800 2.200 Z" fill="#909ba1"/></svg>
<div class="t" style="left:928.7px;top:230.6px;font-size:10.3px;color:#444;transform:scaleX(0.9668);transform-origin:0 50%;">Implimentation steps</div>
<svg style="left:906.500px;top:252.5px" width="7" height="20" viewBox="0 0 7 20"><path d="M6.800 0.300 V19.700 L1.800 17.800 Q0.300 17.200 0.300 15.600 V4.400 Q0.300 2.800 1.800 2.200 Z" fill="#5bbd2b"/></svg>
<div class="t" style="left:928.7px;top:258.4px;font-size:10.0px;color:#444;">Full project plan</div>
<svg style="left:906.500px;top:280.3px" width="7" height="20" viewBox="0 0 7 20"><path d="M6.800 0.300 V19.700 L1.800 17.800 Q0.300 17.200 0.300 15.600 V4.400 Q0.300 2.800 1.800 2.200 Z" fill="#d9a18b"/></svg>
<div class="t" style="left:928.7px;top:286.2px;font-size:10.0px;color:#444;">LTX AI video</div>
<svg style="left:906.500px;top:308.1px" width="7" height="20" viewBox="0 0 7 20"><path d="M6.800 0.300 V19.700 L1.800 17.800 Q0.300 17.200 0.300 15.600 V4.400 Q0.300 2.800 1.800 2.200 Z" fill="#e9711c"/></svg>
<div class="t" style="left:928.7px;top:314.1px;font-size:10.0px;color:#444;">Prompting</div>
<svg style="left:906.500px;top:335.8px" width="7" height="20" viewBox="0 0 7 20"><path d="M6.800 0.300 V19.700 L1.800 17.800 Q0.300 17.200 0.300 15.600 V4.400 Q0.300 2.800 1.800 2.200 Z" fill="#c0188c"/></svg>
<div class="t" style="left:928.7px;top:341.8px;font-size:10.0px;color:#444;">src-config-simulation…</div>
<div class="abs" style="left:1046.3px;top:193.7px;width:144.1px;height:27px;background:#e6e6e6;"></div>
<div class="t" style="left:1061.5px;top:202.8px;font-size:10.3px;color:#444;transform:scaleX(0.9631);transform-origin:0 50%;">Video notes</div>
<div class="t" style="left:1061.5px;top:230.6px;font-size:10.3px;color:#444;transform:scaleX(0.9703);transform-origin:0 50%;">Structure and terminology</div>
<div class="abs" style="left:1191.4px;top:131px;width:18.6px;height:742px;background:#fafafa;"></div>
<div class="abs" style="left:1209.5px;top:131px;width:474px;height:742px;background:#fff;"></div>
<div class="abs" style="left:1209.5px;top:131px;width:1px;height:742px;background:#dcdcdc;"></div>
<div class="abs" id="doc" style="left:1210px;top:126px;width:459.300px;height:738px;overflow:hidden"><div class="abs" style="left:-1210px;top:-126px;width:1715px;height:873px">
<div class="t" style="left:1234.1px;top:127.3px;font-size:11.33px;color:#111;">It's easy to spin or get stuck in a problem.</div>
<div class="t" style="left:1234.1px;top:164.2px;font-size:11.33px;color:#111;">100,000 ft scale: Prompts and similar tools don't learn. They <b>predict</b>.</div>
<div class="t" style="left:1234.1px;top:182.5px;font-size:11.33px;color:#111;">50,000 ft scale: Prompts matter because they help <b>increase the probability</b> that an LLM</div>
<div class="t" style="left:1234.1px;top:195.7px;font-size:11.33px;color:#111;">correctly guesses your dream outcome.</div>
<div class="t" style="left:1234.1px;top:232.5px;font-size:11.33px;color:#111;">Prompting 101:</div>
<div class="t" style="left:1243.1px;top:251.5px;font-size:11.33px;color:#111;">1.</div>
<div class="t" style="left:1262.4px;top:251.5px;font-size:11.33px;color:#111;">Training wheels (the # template)</div>
<div class="t" style="left:1234.1px;top:269.8px;font-size:11.33px;color:#111;"># Context</div>
<div class="t" style="left:1234.1px;top:288.4px;font-size:11.33px;color:#111;">## Task</div>
<div class="t" style="left:1234.1px;top:301.5px;font-size:11.33px;color:#111;">### Guidelines</div>
<div class="t" style="left:1234.1px;top:314.7px;font-size:11.33px;color:#111;">#### Constraints</div>
<div class="t" style="left:1234.1px;top:333.3px;font-size:11.33px;color:#111;">AI chat bots are not good at looking at the middle of the content. They typically hold emphasis</div>
<div class="t" style="left:1234.1px;top:346.1px;font-size:11.33px;color:#111;">on the beginning and end of the prompt. There is no number of words. Each prompt should be</div>
<div class="t" style="left:1234.1px;top:359.6px;font-size:11.33px;color:#111;">tailored to the chat bot you're using. Less is more in some contexts.</div>
<div class="t" style="left:1243.1px;top:396.6px;font-size:11.33px;color:#111;">2.</div>
<div class="t" style="left:1262.4px;top:396.6px;font-size:11.33px;color:#111;">No Training Wheels</div>
<div class="t" style="left:1234.1px;top:415.2px;font-size:11.33px;color:#111;">Not explicitly saying the sections. Part of your work flow.</div>
<div class="t" style="left:1234.1px;top:433.9px;font-size:11.33px;color:#111;font-style:italic;">"you are a world-class prompt engineer. You put together very detailed prompts that are concise</div>
<div class="t" style="left:1234.1px;top:447.0px;font-size:11.33px;color:#111;font-style:italic;">but also detailed enough that I can get my desired output. When I ask for a prompt I want you to</div>
<div class="t" style="left:1234.1px;top:460.2px;font-size:11.33px;color:#111;font-style:italic;">put together the prompt in markdown in a code block so I can easily copy it."</div>
<div class="t" style="left:1234.1px;top:497.1px;font-size:11.33px;color:#111;">Following this statement... add details on the app you're creating.</div>
<div class="t" style="left:1234.1px;top:533.9px;font-size:11.33px;color:#111;font-style:italic;"><span style="font-style:normal">"</span>Write me a prompt that will generate a <span style="text-decoration:underline wavy #e03030 .6px;text-underline-offset:1.500px">Fullstack</span> app that will blah blah blah"</div>
<div class="t" style="left:1234.1px;top:570.8px;font-size:11.33px;color:#111;">There are two different categories of AI bots.</div>
<div class="t" style="left:1234.1px;top:589.5px;font-size:11.33px;color:#111;"><b>Self-reflective bots</b>: These bots go through a step-by-step internal review of the data given and</div>
<div class="t" style="left:1234.1px;top:602.6px;font-size:11.33px;color:#111;">compare it to the response it wants to give. It is slower but less prone to errors. It also runs the</div>
<div class="t" style="left:1234.1px;top:615.8px;font-size:11.33px;color:#111;">risk of overthinking.</div>
<div class="t" style="left:1234.1px;top:634.0px;font-size:11.33px;color:#111;"><b>Direct-output bots</b>: These bots fetch data and output it instantly without thinking over it. It is</div>
<div class="t" style="left:1234.1px;top:647.5px;font-size:11.33px;color:#111;">way faster than self-reflective bots but holds a higher risk of being inaccurate.</div>
<div class="t" style="left:1242.9px;top:681.2px;font-size:11.33px;color:#111;">3.</div>
<div class="t" style="left:1262.3px;top:681.2px;font-size:11.33px;color:#111;">Meta-Prompting</div>
<div class="t" style="left:1234.1px;top:699.7px;font-size:11.33px;color:#111;">Reverse meta-prompting: Before you end the chat with Lovable, ask it this in chat mode:</div>
<div class="t" style="left:1234.1px;top:718.5px;font-size:11.33px;color:#111;font-style:italic;">"Put together a detailed instructive prompt end to end I can provide from the beginning</div>
<div class="t" style="left:1234.1px;top:731.2px;font-size:11.33px;color:#111;font-style:italic;">that captures all this."</div>
<div class="t" style="left:1234.1px;top:749.7px;font-size:11.33px;color:#111;">And before you say that, maybe you should say this if you were encountering errors: <i>"This is a</i></div>
<div class="t" style="left:1234.1px;top:763.1px;font-size:11.33px;color:#111;font-style:italic;">good start, can you give detailed 'why' for some of your requirements so that it's fully understood</div>
<div class="t" style="left:1234.1px;top:775.8px;font-size:11.33px;color:#111;font-style:italic;">as to why these commands are to be followed? (what are the consequences if not)"</div>
<div class="t" style="left:1234.1px;top:813.1px;font-size:11.33px;color:#111;">Your first ever prompt shouldn't include necessarily the functions of the app, but rather the goal</div>
<div class="t" style="left:1234.1px;top:825.8px;font-size:11.33px;color:#111;">of it. Your first prompt should include:</div>
<div class="t" style="left:1220.6px;top:844.9px;font-size:11.33px;color:#111;">•</div>
<div class="t" style="left:1234.1px;top:844.9px;font-size:11.33px;color:#111;">What the goal is</div>
<div class="t" style="left:1220.6px;top:857.3px;font-size:11.33px;color:#111;">•</div>
<div class="t" style="left:1234.1px;top:857.3px;font-size:11.33px;color:#111;">What are you trying to build</div>
<div class="abs" style="left:1331.5px;top:614.8px;width:1px;height:13px;background:#111;"></div>
<svg style="left:1211px;top:590.800px" width="10" height="8" viewBox="0 0 10 8"><path d="M0.500 0.500 H6.500 L9.500 4 L6.500 7.500 H0.500 Z" fill="#c9c9c9" stroke="#9a9a9a" stroke-width=".8"/></svg>
</div></div>
<div class="abs" style="left:1674px;top:198px;width:4.2px;height:223px;background:#727272;border-radius:2.100px"></div>
<div class="abs" style="left:1191.4px;top:867.5px;width:492px;height:5.5px;background:#f0f0f0;"></div>
<div class="abs" style="left:1197.4px;top:868.3px;width:266.3px;height:4.7px;background:#6e6e6e;border-radius:2.300px"></div>
<div class="abs" style="left:869.500px;top:100px;width:808px;height:30.400px;border-radius:6px;background:#fff;box-shadow:0 1px 3px rgba(0,0,0,.22),0 0 1px rgba(0,0,0,.2)"></div>
<svg style="left:880.500px;top:108.500px" width="13" height="13" viewBox="0 0 13 13" fill="none" stroke="#b5b5b5" stroke-width="1.100" stroke-linecap="round" stroke-linejoin="round"><path d="M1.500 1.200 V5.700 H6"/><path d="M1.800 5.500 C4 2.300 8.500 1.500 10.800 4.200 C13 7 11.500 10 7.500 12.300"/></svg>
<svg style="left:901.8px;top:114.1px" width="6.5" height="3.8" viewBox="0 0 6.5 3.8" fill="none" stroke="#bbb" stroke-width="1" stroke-linecap="round" stroke-linejoin="round"><path d="M0.600 0.600 L3.25 3.1999999999999997 L5.9 0.600"/></svg>
<svg style="left:921.500px;top:107.500px" width="12" height="15" viewBox="0 0 12 15" fill="none" stroke="#444" stroke-width="1.100" stroke-linejoin="round"><rect x="1" y="2.500" width="10" height="11.500" rx="1"/><rect x="3.800" y="0.800" width="4.400" height="3.200" rx=".8" fill="#fff"/></svg>
<svg style="left:939.2px;top:114.1px" width="6.5" height="3.8" viewBox="0 0 6.5 3.8" fill="none" stroke="#444" stroke-width="1" stroke-linecap="round" stroke-linejoin="round"><path d="M0.600 0.600 L3.25 3.1999999999999997 L5.9 0.600"/></svg>
<div class="abs" style="left:954px;top:106px;width:1px;height:19px;background:#d6d6d6;"></div>
<div class="abs" style="left:958px;top:104px;width:98px;height:21.800px;border:1px solid #d9d9d9;border-radius:3px 0 0 3px;background:#fff"></div>
<div class="abs" style="left:1055px;top:104px;width:45px;height:21.800px;border:1px solid #d9d9d9;border-radius:0 3px 3px 0;background:#fff"></div>
<div class="t" style="left:964.5px;top:110.0px;font-size:11.3px;color:#444;transform:scaleX(0.9371);transform-origin:0 50%;">Calibri</div>
<svg style="left:1043.0px;top:114.0px" width="7" height="4" viewBox="0 0 7 4" fill="none" stroke="#444" stroke-width="1.1" stroke-linecap="round" stroke-linejoin="round"><path d="M0.600 0.600 L3.5 3.4 L6.4 0.600"/></svg>
<div class="t" style="left:1062.8px;top:110.0px;font-size:11.3px;color:#444;transform:scaleX(0.8954);transform-origin:0 50%;">11</div>
<svg style="left:1087.0px;top:114.0px" width="7" height="4" viewBox="0 0 7 4" fill="none" stroke="#444" stroke-width="1.1" stroke-linecap="round" stroke-linejoin="round"><path d="M0.600 0.600 L3.5 3.4 L6.4 0.600"/></svg>
<div class="t" style="left:1113.8px;top:108.3px;font-size:14.5px;color:#333;font-weight:bold;transform:scaleX(0.8786);transform-origin:0 50%;">B</div>
<div class="t" style="left:1141px;top:108.3px;font-size:14.5px;color:#333;font-style:italic;font-family:'Liberation Serif',serif;transform:scaleX(0.9319);transform-origin:0 50%;">I</div>
<div class="t" style="left:1162.8px;top:108.5px;font-size:13px;color:#333;transform:scaleX(1.0332);transform-origin:0 50%;">U</div>
<div class="abs" style="left:1162.5px;top:122.3px;width:10.3px;height:1px;background:#333;"></div>
<svg style="left:1186.500px;top:106.500px" width="13" height="12" viewBox="0 0 13 12" fill="none" stroke="#444" stroke-width="1" stroke-linejoin="round"><path d="M8.500 1 L12 4.500 L6.500 10 L3 10.500 L3.500 7 Z"/><path d="M2.500 11 L0.800 11.500 L1.300 9.800"/></svg>
<div class="abs" style="left:1185px;top:120.5px;width:15.5px;height:2.2px;background:#ffee00;"></div>
<svg style="left:1207.2px;top:114.1px" width="6.5" height="3.8" viewBox="0 0 6.5 3.8" fill="none" stroke="#444" stroke-width="1" stroke-linecap="round" stroke-linejoin="round"><path d="M0.600 0.600 L3.25 3.1999999999999997 L5.9 0.600"/></svg>
<div class="t" style="left:1228.5px;top:107.0px;font-size:13.5px;color:#444;transform:scaleX(1.0550);transform-origin:0 50%;">A</div>
<div class="abs" style="left:1225px;top:120.3px;width:15.5px;height:2.4px;background:#f0102e;"></div>
<svg style="left:1247.2px;top:114.1px" width="6.5" height="3.8" viewBox="0 0 6.5 3.8" fill="none" stroke="#444" stroke-width="1" stroke-linecap="round" stroke-linejoin="round"><path d="M0.600 0.600 L3.25 3.1999999999999997 L5.9 0.600"/></svg>
<div class="abs" style="left:1266.8px;top:114.1px;width:2.200px;height:2.200px;border-radius:50%;background:#333"></div>
<div class="abs" style="left:1271.5px;top:114.1px;width:2.200px;height:2.200px;border-radius:50%;background:#333"></div>
<div class="abs" style="left:1276.2px;top:114.1px;width:2.200px;height:2.200px;border-radius:50%;background:#333"></div>
<div class="abs" style="left:1288.6px;top:106px;width:1px;height:19px;background:#d6d6d6;"></div>
<svg style="left:1297.500px;top:108.500px" width="14" height="13" viewBox="0 0 14 13"><g fill="#2b7cd3"><circle cx="1.300" cy="1.500" r="1.200"/><circle cx="1.300" cy="6.500" r="1.200"/><circle cx="1.300" cy="11.500" r="1.200"/></g><path d="M4.500 1.500 H13.500 M4.500 6.500 H13.500 M4.500 11.500 H13.500" stroke="#444" stroke-width="1"/></svg>
<svg style="left:1318.8px;top:114.1px" width="6.5" height="3.8" viewBox="0 0 6.5 3.8" fill="none" stroke="#444" stroke-width="1" stroke-linecap="round" stroke-linejoin="round"><path d="M0.600 0.600 L3.25 3.1999999999999997 L5.9 0.600"/></svg>
<svg style="left:1337.500px;top:108px" width="14" height="14" viewBox="0 0 14 14"><g font-size="4.200" font-family="Liberation Sans,sans-serif" fill="#2b7cd3"><text x="0" y="3.500">1</text><text x="0" y="8.500">2</text><text x="0" y="13.500">3</text></g><path d="M4.800 2 H13.500 M4.800 7 H13.500 M4.800 12 H13.500" stroke="#444" stroke-width="1"/></svg>
<svg style="left:1358.8px;top:114.1px" width="6.5" height="3.8" viewBox="0 0 6.5 3.8" fill="none" stroke="#444" stroke-width="1" stroke-linecap="round" stroke-linejoin="round"><path d="M0.600 0.600 L3.25 3.1999999999999997 L5.9 0.600"/></svg>
<div class="abs" style="left:1378.3px;top:114.1px;width:2.200px;height:2.200px;border-radius:50%;background:#333"></div>
<div class="abs" style="left:1383.0px;top:114.1px;width:2.200px;height:2.200px;border-radius:50%;background:#333"></div>
<div class="abs" style="left:1387.7px;top:114.1px;width:2.200px;height:2.200px;border-radius:50%;background:#333"></div>
<div class="abs" style="left:1400.4px;top:106px;width:1px;height:19px;background:#d6d6d6;"></div>
<div class="t" style="left:1409.5px;top:107.2px;font-size:15px;color:#444;font-style:italic;">A</div>
<svg style="left:1413.500px;top:114.500px" width="11" height="9" viewBox="0 0 11 9"><path d="M10 0.500 L5.500 5 L4 7.500 L6.500 6 L10.500 1.200 Z" fill="#5a5a5a"/><path d="M0.800 7 Q2.500 4.500 4.500 6.500 Q3.500 9 0.800 7 Z" fill="#2b7cd3"/></svg>
<svg style="left:1427.2px;top:114.1px" width="6.5" height="3.8" viewBox="0 0 6.5 3.8" fill="none" stroke="#444" stroke-width="1" stroke-linecap="round" stroke-linejoin="round"><path d="M0.600 0.600 L3.25 3.1999999999999997 L5.9 0.600"/></svg>
<div class="abs" style="left:1442.3px;top:106px;width:1px;height:19px;background:#d6d6d6;"></div>
<svg style="left:1450px;top:106.500px" width="17" height="17" viewBox="0 0 17 17" fill="none"><path d="M9.500 3 V1 H1 V10 H6" stroke="#444" stroke-width="1"/><path d="M2.800 5.300 L4.500 7 L8.500 2.500" stroke="#444" stroke-width="1"/><path d="M11 7 L12.300 10 L15.500 10.300 L13.100 12.400 L13.800 15.600 L11 13.900 L8.200 15.600 L8.900 12.400 L6.500 10.300 L9.700 10 Z" stroke="#e8621a" stroke-width="1.100" stroke-linejoin="round"/></svg>
<svg style="left:1470.5px;top:114.1px" width="6.5" height="3.8" viewBox="0 0 6.5 3.8" fill="none" stroke="#444" stroke-width="1" stroke-linecap="round" stroke-linejoin="round"><path d="M0.600 0.600 L3.25 3.1999999999999997 L5.9 0.600"/></svg>
<div class="abs" style="left:1485.5px;top:106px;width:1px;height:19px;background:#d6d6d6;"></div>
<div class="t" style="left:1493.5px;top:107.4px;font-size:8px;color:#555;transform:scaleX(1.0854);transform-origin:0 50%;">abc</div>
<svg style="left:1495.500px;top:117.500px" width="10" height="5" viewBox="0 0 10 5" fill="none" stroke="#2f9e6a" stroke-width="1.100" stroke-linecap="round" stroke-linejoin="round"><path d="M0.800 2 L3.300 4.300 L9.200 0.700"/></svg>
<svg style="left:1515.8px;top:114.1px" width="6.5" height="3.8" viewBox="0 0 6.5 3.8" fill="none" stroke="#444" stroke-width="1" stroke-linecap="round" stroke-linejoin="round"><path d="M0.600 0.600 L3.25 3.1999999999999997 L5.9 0.600"/></svg>
<div class="abs" style="left:1532.5px;top:106px;width:1px;height:19px;background:#d6d6d6;"></div>
<svg style="left:1542.500px;top:106.500px" width="11" height="17" viewBox="0 0 11 17" fill="none"><rect x="3" y="0.800" width="5" height="10" rx="2.500" fill="#3b82d6" stroke="#2b6cc0" stroke-width=".8"/><path d="M0.800 7.500 a4.700 4.700 0 0 0 9.400 0 M5.500 12.300 V16" stroke="#555" stroke-width="1" stroke-linecap="round"/></svg>
<div class="abs" style="left:1564px;top:106px;width:1px;height:19px;background:#d6d6d6;"></div>
<svg style="left:1572.500px;top:108.500px" width="14" height="14" viewBox="0 0 14 14" fill="none" stroke="#444" stroke-width="1.100" stroke-linejoin="round"><path d="M1 2.500 a1.500 1.500 0 0 1 1.500 -1.500 h9 a1.500 1.500 0 0 1 1.500 1.500 v6 L8.500 13 h-6 a1.500 1.500 0 0 1 -1.500 -1.500 z"/><path d="M13 8.500 h-3 a1.500 1.500 0 0 0 -1.500 1.500 v3"/></svg>
<div class="abs" style="left:1595.8px;top:106px;width:1px;height:19px;background:#d6d6d6;"></div>
<div class="abs" style="left:1605.2px;top:114.1px;width:2.200px;height:2.200px;border-radius:50%;background:#333"></div>
<div class="abs" style="left:1609.9px;top:114.1px;width:2.200px;height:2.200px;border-radius:50%;background:#333"></div>
<div class="abs" style="left:1614.6px;top:114.1px;width:2.200px;height:2.200px;border-radius:50%;background:#333"></div>
<div class="abs" style="left:1627px;top:106px;width:1px;height:19px;background:#d6d6d6;"></div>
<svg style="left:1661.4px;top:116.0px" width="7" height="4" viewBox="0 0 7 4" fill="none" stroke="#444" stroke-width="1.1" stroke-linecap="round" stroke-linejoin="round"><path d="M0.600 0.600 L3.5 3.4 L6.4 0.600"/></svg>
<div class="abs" style="left:1684px;top:34px;width:31px;height:839px;background:#fff;"></div>
<div class="abs" style="left:1684px;top:34px;width:1px;height:839px;background:#eeeef0;"></div>
<svg style="left:1691.7px;top:43.5px" width="16" height="14" viewBox="0 0 16 14" fill="none" stroke="#3b3d42" stroke-width="1.300"><rect x="1" y="1" width="14" height="12" rx="2"/><path d="M6 1 V13"/><path d="M3 4 h1 M3 6.300 h1 M3 8.600 h1" stroke-width="1" stroke-linecap="round"/></svg>
<svg style="left:1693.2px;top:74.8px" width="13" height="13" viewBox="0 0 13 13"><rect width="6" height="6" fill="#f25022"/><rect x="7" width="6" height="6" fill="#7fba00"/><rect y="7" width="6" height="6" fill="#00a4ef"/><rect x="7" y="7" width="6" height="6" fill="#ffb900"/></svg>
<svg style="left:1690.7px;top:100px" width="18" height="18" viewBox="0 0 18 18"><circle cx="9" cy="9" r="6.2" fill="#fff" stroke="#6a6d73" stroke-width=".85" stroke-dasharray="2.300 1.200"/><g transform="translate(9 9) scale(.84) translate(-9 -9)"><path d="M6.200 11.500 A2 2 0 0 1 6 7.600 A2.700 2.700 0 0 1 11.100 7.400 A2.100 2.100 0 0 1 11.300 11.500 Z" fill="#2f7fe0"/></g></svg>
<svg style="left:1690.7px;top:127.6px" width="18" height="18" viewBox="0 0 18 18"><circle cx="9" cy="9" r="6.2" fill="#fff" stroke="#6a6d73" stroke-width=".85" stroke-dasharray="2.300 1.200"/><g transform="translate(9 9) scale(.84) translate(-9 -9)"><circle cx="9" cy="9" r="4.700" fill="#8e3cc4"/><text x="9" y="11.200" font-size="6" font-weight="bold" font-family="Liberation Sans,sans-serif" fill="#fff" text-anchor="middle">N</text></g></svg>
<svg style="left:1690.7px;top:155.7px" width="18" height="18" viewBox="0 0 18 18"><circle cx="9" cy="9" r="6.2" fill="#fff" stroke="#6a6d73" stroke-width=".85" stroke-dasharray="2.300 1.200"/><g transform="translate(9 9) scale(.84) translate(-9 -9)"><path d="M6.200 11.500 A2 2 0 0 1 6 7.600 A2.700 2.700 0 0 1 11.100 7.400 A2.100 2.100 0 0 1 11.300 11.500 Z" fill="#2f7fe0"/></g></svg>
<div class="abs" style="left:1687.7px;top:179px;width:24px;height:24px;border-radius:7px;background:#ececf1;border:1px solid #ececf1"></div>
<svg style="left:1693.2px;top:185px" width="13" height="12" viewBox="0 0 13 12"><rect x="3.500" y="0.300" width="9" height="11.400" rx="1.400" fill="#ca64ea"/><rect x="8" y="3.200" width="4.500" height="2.800" fill="#ae4bd5"/><rect x="8" y="6" width="4.500" height="2.800" fill="#9332bf"/><rect x="0.300" y="2.500" width="7.400" height="7.400" rx="1" fill="#7719aa"/><text x="4" y="8.400" font-size="6" font-weight="bold" font-family="Liberation Sans,sans-serif" fill="#fff" text-anchor="middle">N</text></svg>
<svg style="left:1693.5px;top:215.1px" width="12.400" height="8.800" viewBox="0 0 15 11"><rect width="15" height="11" rx="3" fill="#ff0033"/><path d="M6 3.100 L10 5.500 L6 7.900 Z" fill="#fff"/></svg>
<svg style="left:1690.7px;top:238px" width="18" height="18" viewBox="0 0 18 18"><circle cx="9" cy="9" r="6.2" fill="#fff" stroke="#6a6d73" stroke-width=".85" stroke-dasharray="2.300 1.200"/><g transform="translate(9 9) scale(.84) translate(-9 -9)"><path d="M9 9 L9 4.200 A4.800 4.800 0 0 0 4.200 9 Z" fill="#f25022"/><path d="M9 9 L9 4.200 A4.800 4.800 0 0 1 13.800 9 Z" fill="#7fba00"/><path d="M9 9 L4.200 9 A4.800 4.800 0 0 0 9 13.800 Z" fill="#00a4ef"/><path d="M9 9 L13.800 9 A4.800 4.800 0 0 1 9 13.800 Z" fill="#ffb900"/></g></svg>
<svg style="left:1690.7px;top:266.5px" width="18" height="18" viewBox="0 0 18 18"><circle cx="9" cy="9" r="6.2" fill="#fff" stroke="#6a6d73" stroke-width=".85" stroke-dasharray="2.300 1.200"/><g transform="translate(9 9) scale(.84) translate(-9 -9)"><circle cx="9" cy="9" r="4.700" fill="#8e3cc4"/><text x="9" y="11.200" font-size="6" font-weight="bold" font-family="Liberation Sans,sans-serif" fill="#fff" text-anchor="middle">N</text></g></svg>
<svg style="left:1692.7px;top:299.5px" width="14" height="9" viewBox="0 0 14 9"><path d="M3.500 9 A3 3 0 0 1 3.200 3.100 A4 4 0 0 1 10.600 2.800 A3.100 3.100 0 0 1 10.800 9 Z" fill="#2f7fe0"/></svg>
<svg style="left:1690.7px;top:321.8px" width="18" height="18" viewBox="0 0 18 18"><circle cx="9" cy="9" r="6.2" fill="#fff" stroke="#6a6d73" stroke-width=".85" stroke-dasharray="2.300 1.200"/><g transform="translate(9 9) scale(.84) translate(-9 -9)"><path d="M9 9 L9 4.200 A4.800 4.800 0 0 0 4.200 9 Z" fill="#f25022"/><path d="M9 9 L9 4.200 A4.800 4.800 0 0 1 13.800 9 Z" fill="#7fba00"/><path d="M9 9 L4.200 9 A4.800 4.800 0 0 0 9 13.800 Z" fill="#00a4ef"/><path d="M9 9 L13.800 9 A4.800 4.800 0 0 1 9 13.800 Z" fill="#ffb900"/></g></svg>
<svg style="left:1690.7px;top:349.4px" width="18" height="18" viewBox="0 0 18 18"><circle cx="9" cy="9" r="6.2" fill="#fff" stroke="#6a6d73" stroke-width=".85" stroke-dasharray="2.300 1.200"/><g transform="translate(9 9) scale(.84) translate(-9 -9)"><circle cx="9" cy="9" r="5.200" fill="#18181a"/><text x="9" y="10.600" font-size="4" font-weight="bold" font-family="Liberation Sans,sans-serif" fill="#fff" text-anchor="middle">ABA</text></g></svg>
<svg style="left:1693.5px;top:381.90000000000003px" width="12.400" height="8.800" viewBox="0 0 15 11"><rect width="15" height="11" rx="3" fill="#ff0033"/><path d="M6 3.100 L10 5.500 L6 7.900 Z" fill="#fff"/></svg>
<svg style="left:1693.7px;top:407.7px" width="12" height="12" viewBox="0 0 13 13"><rect width="13" height="13" fill="#0a0a0a"/><ellipse cx="6.500" cy="7" rx="2.200" ry="3" fill="none" stroke="#fff" stroke-width=".9"/><path d="M2 3.500 L4.500 5.500 M11 3.500 L8.500 5.500 M1.800 7 H4.300 M8.700 7 H11.200 M2 10.500 L4.500 8.500 M11 10.500 L8.500 8.500 M5 3 a1.500 1.500 0 0 1 3 0" stroke="#fff" stroke-width=".8" fill="none"/></svg>
<div class="abs" style="left:1688px;top:429.7px;width:24px;height:1px;background:#e6e6ea;"></div>
<svg style="left:1694.7px;top:440.3px" width="10" height="10" viewBox="0 0 10 10" stroke="#44464c" stroke-width="1.100" stroke-linecap="round"><path d="M5 0.500 V9.500 M0.500 5 H9.500"/></svg>
</div>
</div>

</div>
</body>
</html>
